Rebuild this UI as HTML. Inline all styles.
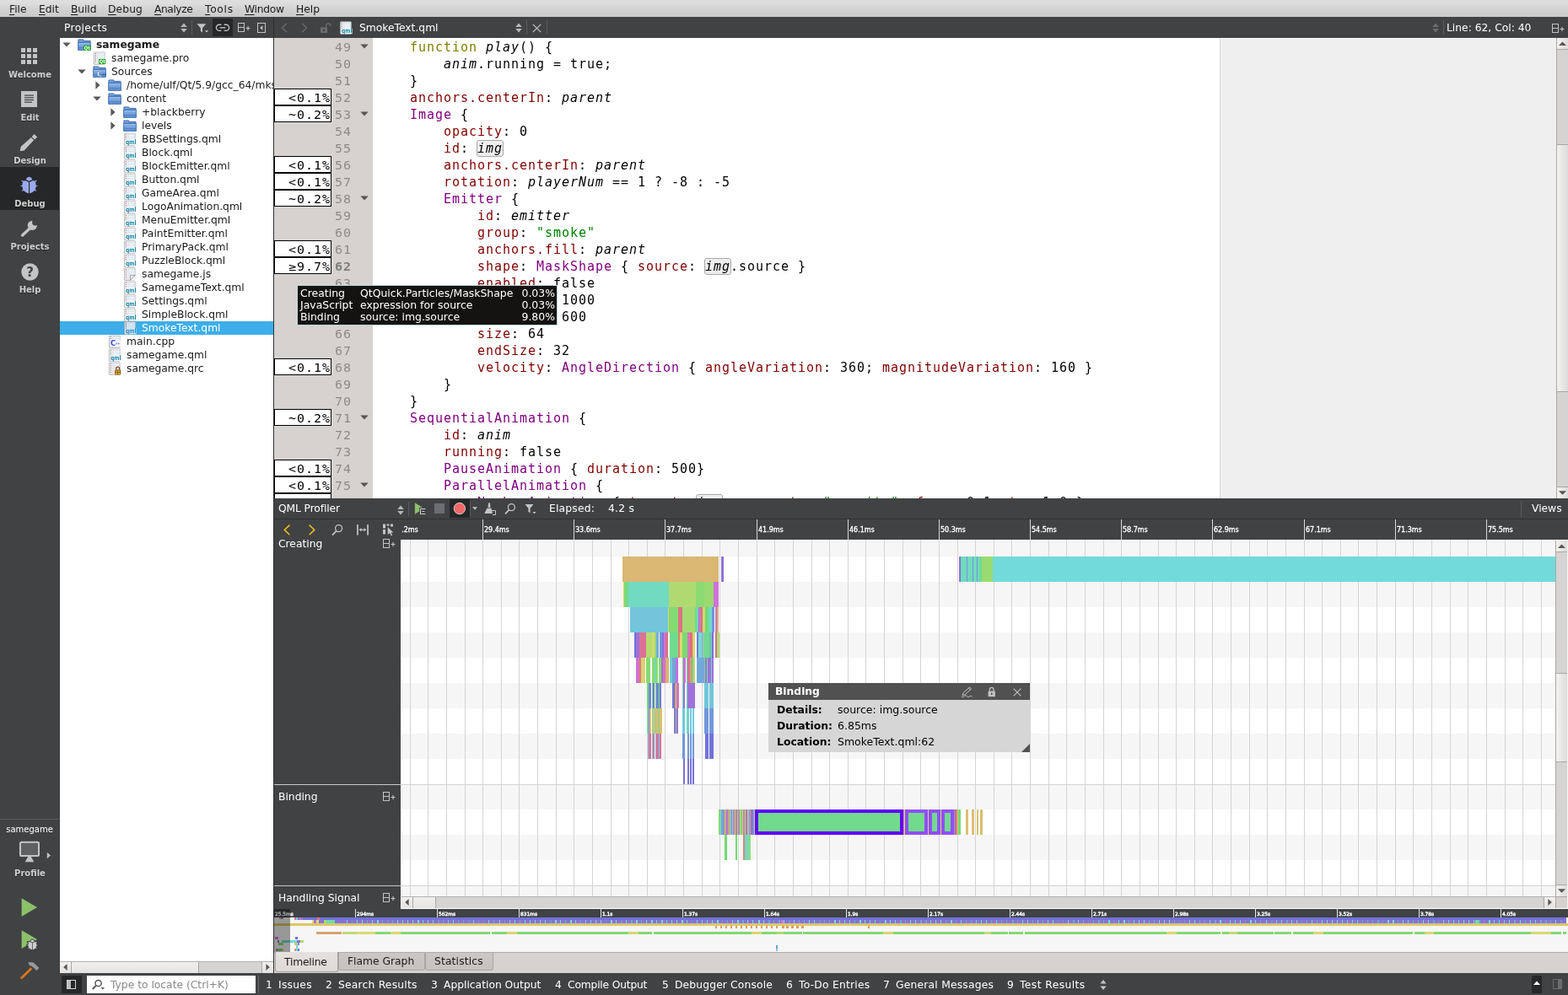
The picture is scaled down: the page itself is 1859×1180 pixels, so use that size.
<!DOCTYPE html>
<html lang="en"><head><meta charset="utf-8"><title>Qt Creator - QML Profiler</title>
<style>
html,body{margin:0;padding:0;background:#404244;}
#r{position:absolute;left:0;top:0;width:1859px;height:1180px;overflow:hidden;will-change:transform;font-family:"DejaVu Sans","Liberation Sans",sans-serif;}
#r div,#r svg{position:absolute;}
#r svg{overflow:visible;}
.t{white-space:pre;line-height:0;}
.m{font-family:"DejaVu Sans Mono","Liberation Mono",monospace;}
.bl{display:inline-block;width:0;height:20px;vertical-align:baseline;}
u{text-decoration:underline;text-underline-offset:2px;text-decoration-thickness:1px;}
.k{color:#808000}.p{color:#800000}.y{color:#800080}.s{color:#008000}.i{font-style:italic}
.code{letter-spacing:0.96875px;color:#000}
.hl{outline:1px solid #a8a8a8;background:#eee;border-radius:2px;}
.rl{-webkit-text-stroke:0.3px #fff;}
.rl2{-webkit-text-stroke:0.4px #fff;}
.pb{width:68px;height:20px;box-sizing:border-box;border:1px solid #000;background:#fff;}
</style></head>
<body><div id="r">
<div style="left:0px;top:0px;width:1859px;height:20px;background:linear-gradient(#dfdfdf,#dcdcdc 20%,#d3d3d3 50%,#cccccc 85%,#cacaca 95%,#d0d0d0);"></div>
<div class="t" style="left:11px;top:-5px;font-size:12.3px;color:#1a1a1a;letter-spacing:0px;"><span class="bl"></span><u>F</u>ile</div>
<div class="t" style="left:46px;top:-5px;font-size:12.3px;color:#1a1a1a;letter-spacing:0px;"><span class="bl"></span><u>E</u>dit</div>
<div class="t" style="left:84px;top:-5px;font-size:12.3px;color:#1a1a1a;letter-spacing:-0.1px;"><span class="bl"></span><u>B</u>uild</div>
<div class="t" style="left:128px;top:-5px;font-size:12.3px;color:#1a1a1a;letter-spacing:0.1px;"><span class="bl"></span><u>D</u>ebug</div>
<div class="t" style="left:183px;top:-5px;font-size:12.3px;color:#1a1a1a;letter-spacing:-0.45px;"><span class="bl"></span><u>A</u>nalyze</div>
<div class="t" style="left:243px;top:-5px;font-size:12.3px;color:#1a1a1a;letter-spacing:0.7px;"><span class="bl"></span><u>T</u>ools</div>
<div class="t" style="left:290px;top:-5px;font-size:12.3px;color:#1a1a1a;letter-spacing:-0.28px;"><span class="bl"></span><u>W</u>indow</div>
<div class="t" style="left:351px;top:-5px;font-size:12.3px;color:#1a1a1a;letter-spacing:0px;"><span class="bl"></span><u>H</u>elp</div>
<div style="left:0px;top:20px;width:71px;height:1160px;background:#404244;"></div>
<div style="left:0px;top:198px;width:70px;height:51px;background:#262728;"></div>
<div class="t" style="left:0px;top:72px;font-size:10px;color:#cecece;font-weight:bold;width:71px;text-align:center;text-shadow:0 1px 0 rgba(0,0,0,.45);"><span class="bl"></span>Welcome</div>
<div class="t" style="left:0px;top:123px;font-size:10px;color:#cecece;font-weight:bold;width:71px;text-align:center;text-shadow:0 1px 0 rgba(0,0,0,.45);"><span class="bl"></span>Edit</div>
<div class="t" style="left:0px;top:174px;font-size:10px;color:#cecece;font-weight:bold;width:71px;text-align:center;text-shadow:0 1px 0 rgba(0,0,0,.45);"><span class="bl"></span>Design</div>
<div class="t" style="left:0px;top:225px;font-size:10px;color:#cecece;font-weight:bold;width:71px;text-align:center;text-shadow:0 1px 0 rgba(0,0,0,.45);"><span class="bl"></span>Debug</div>
<div class="t" style="left:0px;top:276px;font-size:10px;color:#cecece;font-weight:bold;width:71px;text-align:center;text-shadow:0 1px 0 rgba(0,0,0,.45);"><span class="bl"></span>Projects</div>
<div class="t" style="left:0px;top:327px;font-size:10px;color:#cecece;font-weight:bold;width:71px;text-align:center;text-shadow:0 1px 0 rgba(0,0,0,.45);"><span class="bl"></span>Help</div>
<svg style="left:25px;top:57px;" width="19" height="19" viewBox="0 0 19 19"><g fill="#c4c4c4"><rect x="0" y="0" width="5" height="5"/><rect x="7" y="0" width="5" height="5"/><rect x="14" y="0" width="5" height="5"/><rect x="0" y="7" width="5" height="5"/><rect x="7" y="7" width="5" height="5"/><rect x="14" y="7" width="5" height="5"/><rect x="0" y="14" width="5" height="5"/><rect x="7" y="14" width="5" height="5"/><rect x="14" y="14" width="5" height="5"/></g></svg>
<svg style="left:25px;top:108px;" width="19" height="19" viewBox="0 0 19 19"><rect width="19" height="19" fill="#c4c4c4"/><g fill="#404244"><rect x="4" y="4.5" width="11" height="1.2"/><rect x="4" y="7.2" width="11" height="1.2"/><rect x="4" y="9.9" width="11" height="1.2"/><rect x="4" y="12.6" width="9" height="1.2"/></g></svg>
<svg style="left:23px;top:158px;" width="24" height="24" viewBox="0 0 24 24"><g fill="#c4c4c4"><path d="M0.7 21.3 L1.8 15.7 L14 5 L17.1 8.3 L5.6 20.5 Z"/><path d="M14.7 4.2 L17.4 1.0 L21.2 4.4 L18.1 7.4 Z"/></g></svg>
<svg style="left:23px;top:208px;" width="24" height="24" viewBox="0 0 24 24"><g fill="#9aa9ef"><path d="M7.9 5.0 C8.6 2.8 10 1.7 11.55 1.7 C13.1 1.7 14.5 2.8 15.2 5.0 L11.55 6.8 Z"/><path d="M6.7 5.9 L11.0 7.9 L11.0 21.2 C8 20.4 4.6 18.4 3.9 15.4 C3.3 13 3.3 10.5 3.9 8.6 C4.5 7.2 5.6 6.3 6.7 5.9 Z"/><path d="M16.4 5.9 L12.1 7.9 L12.1 21.2 C15.1 20.4 18.5 18.4 19.2 15.4 C19.8 13 19.8 10.5 19.2 8.6 C18.6 7.2 17.5 6.3 16.4 5.9 Z"/><path d="M2.0 5.8 L5.6 6.6 L4.2 8.2 Z M0.8 12.5 L4 11.6 L4 13.4 Z M2.6 19.0 L4.2 16.2 L5.6 17.8 Z M21.1 5.8 L17.5 6.6 L18.9 8.2 Z M22.3 12.5 L19.1 11.6 L19.1 13.4 Z M20.5 19.0 L18.9 16.2 L17.5 17.8 Z"/></g></svg>
<svg style="left:23px;top:260px;" width="24" height="24" viewBox="0 0 24 24"><path d="M3.6 19.0 L13 10.3" stroke="#c4c4c4" stroke-width="3.4" stroke-linecap="round" fill="none"/><circle cx="15.4" cy="7.3" r="5.6" fill="#c4c4c4"/><circle cx="18.9" cy="3.8" r="3.75" fill="#404244"/></svg>
<svg style="left:25px;top:312px;" width="21" height="21" viewBox="0 0 21 21"><circle cx="10.5" cy="10.5" r="10.2" fill="#c4c4c4"/></svg>
<div class="t" style="left:25px;top:308px;font-size:15px;color:#404244;font-weight:bold;width:21px;text-align:center;"><span class="bl"></span>?</div>
<div style="left:0px;top:971px;width:70px;height:1px;background:#5a5c5e;"></div>
<div class="t" style="left:0px;top:967px;font-size:10px;color:#fff;width:70px;text-align:center;"><span class="bl"></span>samegame</div>
<svg style="left:22px;top:997px;" width="26" height="27" viewBox="0 0 26 27"><rect x="2" y="1.8" width="22" height="16.2" rx="1.6" fill="#5f6062" stroke="#c4c4c4" stroke-width="2"/><path d="M11.2 19 L14.8 19 L18.3 25.2 L7.7 25.2 Z" fill="#c4c4c4"/></svg>
<svg style="left:55px;top:1010px;" width="6" height="9" viewBox="0 0 6 9"><path d="M0.8 0.8 L5 4.5 L0.8 8.2 Z" fill="#c4c4c4"/></svg>
<div class="t" style="left:0px;top:1019px;font-size:10px;color:#cecece;font-weight:bold;width:71px;text-align:center;text-shadow:0 1px 0 rgba(0,0,0,.45);"><span class="bl"></span>Profile</div>
<svg style="left:24px;top:1064px;" width="22" height="25" viewBox="0 0 22 25"><path d="M1.6 1.2 L20 12 L1.6 23 Z" fill="#8cc06a"/></svg>
<svg style="left:24px;top:1102px;" width="24" height="26" viewBox="0 0 24 26"><path d="M1.6 1.2 L20 12 L1.6 23 Z" fill="#8cc06a"/><g transform="translate(7.5,11.5) scale(0.6)"><g fill="#404244" stroke="#404244" stroke-width="3.4" stroke-linejoin="round"><path d="M7.9 5.0 C8.6 2.8 10 1.7 11.55 1.7 C13.1 1.7 14.5 2.8 15.2 5.0 L11.55 6.8 Z"/><path d="M6.7 5.9 L11.0 7.9 L11.0 21.2 C8 20.4 4.6 18.4 3.9 15.4 C3.3 13 3.3 10.5 3.9 8.6 C4.5 7.2 5.6 6.3 6.7 5.9 Z"/><path d="M16.4 5.9 L12.1 7.9 L12.1 21.2 C15.1 20.4 18.5 18.4 19.2 15.4 C19.8 13 19.8 10.5 19.2 8.6 C18.6 7.2 17.5 6.3 16.4 5.9 Z"/><path d="M2.0 5.8 L5.6 6.6 L4.2 8.2 Z M0.8 12.5 L4 11.6 L4 13.4 Z M2.6 19.0 L4.2 16.2 L5.6 17.8 Z M21.1 5.8 L17.5 6.6 L18.9 8.2 Z M22.3 12.5 L19.1 11.6 L19.1 13.4 Z M20.5 19.0 L18.9 16.2 L17.5 17.8 Z"/></g><g fill="#cdcdcd"><path d="M7.9 5.0 C8.6 2.8 10 1.7 11.55 1.7 C13.1 1.7 14.5 2.8 15.2 5.0 L11.55 6.8 Z"/><path d="M6.7 5.9 L11.0 7.9 L11.0 21.2 C8 20.4 4.6 18.4 3.9 15.4 C3.3 13 3.3 10.5 3.9 8.6 C4.5 7.2 5.6 6.3 6.7 5.9 Z"/><path d="M16.4 5.9 L12.1 7.9 L12.1 21.2 C15.1 20.4 18.5 18.4 19.2 15.4 C19.8 13 19.8 10.5 19.2 8.6 C18.6 7.2 17.5 6.3 16.4 5.9 Z"/><path d="M2.0 5.8 L5.6 6.6 L4.2 8.2 Z M0.8 12.5 L4 11.6 L4 13.4 Z M2.6 19.0 L4.2 16.2 L5.6 17.8 Z M21.1 5.8 L17.5 6.6 L18.9 8.2 Z M22.3 12.5 L19.1 11.6 L19.1 13.4 Z M20.5 19.0 L18.9 16.2 L17.5 17.8 Z"/></g></g></svg>
<svg style="left:22px;top:1140px;" width="26" height="24" viewBox="0 0 26 24"><path d="M2.8 20.4 L15.4 8.2" stroke="#d9761e" stroke-width="2.8" fill="none"/><path d="M11.1 1.3 L17.2 1.3 L24.3 7.8 L21.5 11.1 L15.4 5.6 L13.6 5.6 Z" fill="#9a9a9a"/></svg>
<div style="left:71px;top:20px;width:253px;height:25px;background:#404244;"></div>
<div class="t" style="left:76px;top:17px;font-size:12.3px;color:#fff;letter-spacing:0.36px;"><span class="bl"></span>Projects</div>
<svg style="left:214px;top:27px;" width="8" height="12" viewBox="0 0 8 12"><path d="M0.2 5 L4 0.6 L7.8 5 Z M0.2 7 L4 11.4 L7.8 7 Z" fill="#b8b8b8"/></svg>
<div style="left:227px;top:24px;width:1px;height:17px;background:#5a5c5e;"></div>
<svg style="left:233px;top:27px;" width="15" height="14" viewBox="0 0 15 14"><path d="M0.4 1.2 L11.4 1.2 L7 6.2 L7 11.4 L4.8 9.8 L4.8 6.2 Z" fill="#c4c4c4"/><path d="M9.8 9.2 L14.2 9.2 L12 11.6 Z" fill="#c4c4c4"/></svg>
<div style="left:252px;top:22px;width:24px;height:21px;background:#262728;"></div>
<svg style="left:256px;top:28px;" width="16" height="10" viewBox="0 0 16 10"><g fill="none" stroke="#c4c4c4" stroke-width="1.4"><path d="M6.4 1.2 L4 1.2 A3.3 3.3 0 0 0 4 8.4 L6.4 8.4"/><path d="M9.6 1.2 L12 1.2 A3.3 3.3 0 0 1 12 8.4 L9.6 8.4"/><path d="M4.6 4.8 L11.4 4.8"/></g></svg>
<svg style="left:282px;top:26px;" width="15" height="14" viewBox="0 0 15 14"><g fill="none" stroke="#c4c4c4" stroke-width="1"><rect x="0.5" y="1.5" width="7" height="10"/><path d="M0.5 6.5 L7.5 6.5"/><path d="M9.5 7.5 L14.5 7.5 M12 5 L12 10" stroke-width="1.2"/></g></svg>
<svg style="left:305px;top:26px;" width="11" height="14" viewBox="0 0 11 14"><rect x="0.5" y="1.5" width="9" height="11" fill="none" stroke="#c4c4c4" stroke-width="1"/><path d="M6.4 4.2 L3.2 7 L6.4 9.8 Z" fill="#c4c4c4"/></svg>
<div style="left:71px;top:45px;width:253px;height:1095px;background:#fff;"></div>
<div style="left:324px;top:20px;width:1px;height:1134px;background:#2d2e2f;"></div>
<div style="left:71px;top:45px;width:253px;height:1093px;overflow:hidden">
<svg style="left:3px;top:5px" width="10" height="6" viewBox="0 0 10 6"><path d="M0.3 0.4 L9.7 0.4 L5 5.6 Z" fill="#5a5a5a"/></svg>
<svg style="left:21px;top:0px" width="17" height="16" viewBox="0 0 17 16"><defs><linearGradient id="fg1" x1="0" y1="0" x2="0" y2="1"><stop offset="0" stop-color="#8db4e6"/><stop offset="0.62" stop-color="#6f9cd8"/><stop offset="0.66" stop-color="#4f7fc2"/><stop offset="0.74" stop-color="#6a97d3"/><stop offset="1" stop-color="#5f8ccb"/></linearGradient></defs><path d="M0.9 1.9 L6.6 1.9 L7.6 3.4 L15.1 3.4 L15.1 6 L0.9 6 Z" fill="#5a8bcd" stroke="#3b6bb0" stroke-width="0.9"/><path d="M1.6 3.3 L6.4 3.3" stroke="#9cc0ec" stroke-width="0.8"/><path d="M0.6 5.6 L15.4 5.6 L15.4 14.4 L0.6 14.4 Z" fill="url(#fg1)" stroke="#3b6bb0" stroke-width="0.9"/><path d="M1.2 6.4 L14.8 6.4" stroke="#a9c8ee" stroke-width="0.7"/><rect x="7.1" y="8.8" width="8.2" height="6.2" rx="0.6" fill="#17a81a"/><text x="11.2" y="14.1" font-family="'DejaVu Sans',sans-serif" font-size="6" font-weight="bold" fill="#fff" text-anchor="middle" textLength="6.799999999999999" lengthAdjust="spacingAndGlyphs">Qt</text></svg>
<div class="t" style="left:43px;top:-8px;font-size:12.3px;color:#1a1a1a;font-weight:bold;"><span class="bl"></span>samegame</div>
<svg style="left:38px;top:16px" width="17" height="16" viewBox="0 0 17 16"><path d="M2.8 0.9 L15.2 0.9 L15.2 15 L2.8 15 Z" fill="#fdfdfd" stroke="#bdbdbd" stroke-width="0.9"/><path d="M2.4 1.2 L2.4 15.4 L14.8 15.4" fill="none" stroke="#9c9c9c" stroke-width="0.7" opacity=".6"/><g shape-rendering="crispEdges"><g fill="#cfe0ee"><rect x="6" y="2" width="9" height="1"/><rect x="6" y="4" width="9" height="1"/><rect x="6" y="6" width="9" height="1"/><rect x="6" y="8" width="9" height="1"/><rect x="6" y="10" width="9" height="1"/><rect x="6" y="12" width="9" height="1"/></g><rect x="6" y="1" width="1" height="14" fill="#f3d3e4"/><g fill="#6a747e"><rect x="4" y="2" width="1" height="1"/><rect x="4" y="4" width="1" height="1"/><rect x="4" y="6" width="1" height="1"/><rect x="4" y="8" width="1" height="1"/><rect x="4" y="10" width="1" height="1"/><rect x="4" y="12" width="1" height="1"/></g></g><rect x="8.1" y="9.1" width="8.2" height="6" rx="0.6" fill="#17a81a"/><text x="12.2" y="14.2" font-family="'DejaVu Sans',sans-serif" font-size="6" font-weight="bold" fill="#fff" text-anchor="middle" textLength="6.799999999999999" lengthAdjust="spacingAndGlyphs">Qt</text></svg>
<div class="t" style="left:61px;top:8px;font-size:12.3px;color:#1a1a1a;"><span class="bl"></span>samegame.pro</div>
<svg style="left:21px;top:37px" width="10" height="6" viewBox="0 0 10 6"><path d="M0.3 0.4 L9.7 0.4 L5 5.6 Z" fill="#5a5a5a"/></svg>
<svg style="left:39px;top:32px" width="17" height="16" viewBox="0 0 17 16"><defs><linearGradient id="fg2" x1="0" y1="0" x2="0" y2="1"><stop offset="0" stop-color="#8db4e6"/><stop offset="0.62" stop-color="#6f9cd8"/><stop offset="0.66" stop-color="#4f7fc2"/><stop offset="0.74" stop-color="#6a97d3"/><stop offset="1" stop-color="#5f8ccb"/></linearGradient></defs><path d="M0.9 1.9 L6.6 1.9 L7.6 3.4 L15.1 3.4 L15.1 6 L0.9 6 Z" fill="#5a8bcd" stroke="#3b6bb0" stroke-width="0.9"/><path d="M1.6 3.3 L6.4 3.3" stroke="#9cc0ec" stroke-width="0.8"/><path d="M0.6 5.6 L15.4 5.6 L15.4 14.4 L0.6 14.4 Z" fill="url(#fg2)" stroke="#3b6bb0" stroke-width="0.9"/><path d="M1.2 6.4 L14.8 6.4" stroke="#a9c8ee" stroke-width="0.7"/><text x="8.4" y="14.2" font-family="'DejaVu Sans',sans-serif" font-size="9" font-weight="bold" fill="#f4f8ff" stroke="#2c5a9c" stroke-width="0.35" text-anchor="middle">C</text><text x="13.4" y="13.4" font-family="'DejaVu Sans',sans-serif" font-size="5.5" font-weight="bold" fill="#1f3f80" text-anchor="middle" textLength="5.4" lengthAdjust="spacingAndGlyphs">++</text></svg>
<div class="t" style="left:61px;top:24px;font-size:12.3px;color:#1a1a1a;"><span class="bl"></span>Sources</div>
<svg style="left:42px;top:51px" width="6" height="10" viewBox="0 0 6 10"><path d="M0.4 0.3 L5.6 5 L0.4 9.7 Z" fill="#5a5a5a"/></svg>
<svg style="left:57px;top:48px" width="17" height="16" viewBox="0 0 17 16"><defs><linearGradient id="fg3" x1="0" y1="0" x2="0" y2="1"><stop offset="0" stop-color="#8db4e6"/><stop offset="0.62" stop-color="#6f9cd8"/><stop offset="0.66" stop-color="#4f7fc2"/><stop offset="0.74" stop-color="#6a97d3"/><stop offset="1" stop-color="#5f8ccb"/></linearGradient></defs><path d="M0.9 1.9 L6.6 1.9 L7.6 3.4 L15.1 3.4 L15.1 6 L0.9 6 Z" fill="#5a8bcd" stroke="#3b6bb0" stroke-width="0.9"/><path d="M1.6 3.3 L6.4 3.3" stroke="#9cc0ec" stroke-width="0.8"/><path d="M0.6 5.6 L15.4 5.6 L15.4 14.4 L0.6 14.4 Z" fill="url(#fg3)" stroke="#3b6bb0" stroke-width="0.9"/><path d="M1.2 6.4 L14.8 6.4" stroke="#a9c8ee" stroke-width="0.7"/></svg>
<div class="t" style="left:79px;top:40px;font-size:12.3px;color:#1a1a1a;"><span class="bl"></span>/home/ulf/Qt/5.9/gcc_64/mkspecs</div>
<svg style="left:39px;top:69px" width="10" height="6" viewBox="0 0 10 6"><path d="M0.3 0.4 L9.7 0.4 L5 5.6 Z" fill="#5a5a5a"/></svg>
<svg style="left:57px;top:64px" width="17" height="16" viewBox="0 0 17 16"><defs><linearGradient id="fg4" x1="0" y1="0" x2="0" y2="1"><stop offset="0" stop-color="#8db4e6"/><stop offset="0.62" stop-color="#6f9cd8"/><stop offset="0.66" stop-color="#4f7fc2"/><stop offset="0.74" stop-color="#6a97d3"/><stop offset="1" stop-color="#5f8ccb"/></linearGradient></defs><path d="M0.9 1.9 L6.6 1.9 L7.6 3.4 L15.1 3.4 L15.1 6 L0.9 6 Z" fill="#5a8bcd" stroke="#3b6bb0" stroke-width="0.9"/><path d="M1.6 3.3 L6.4 3.3" stroke="#9cc0ec" stroke-width="0.8"/><path d="M0.6 5.6 L15.4 5.6 L15.4 14.4 L0.6 14.4 Z" fill="url(#fg4)" stroke="#3b6bb0" stroke-width="0.9"/><path d="M1.2 6.4 L14.8 6.4" stroke="#a9c8ee" stroke-width="0.7"/></svg>
<div class="t" style="left:79px;top:56px;font-size:12.3px;color:#1a1a1a;"><span class="bl"></span>content</div>
<svg style="left:60px;top:83px" width="6" height="10" viewBox="0 0 6 10"><path d="M0.4 0.3 L5.6 5 L0.4 9.7 Z" fill="#5a5a5a"/></svg>
<svg style="left:75px;top:80px" width="17" height="16" viewBox="0 0 17 16"><defs><linearGradient id="fg5" x1="0" y1="0" x2="0" y2="1"><stop offset="0" stop-color="#8db4e6"/><stop offset="0.62" stop-color="#6f9cd8"/><stop offset="0.66" stop-color="#4f7fc2"/><stop offset="0.74" stop-color="#6a97d3"/><stop offset="1" stop-color="#5f8ccb"/></linearGradient></defs><path d="M0.9 1.9 L6.6 1.9 L7.6 3.4 L15.1 3.4 L15.1 6 L0.9 6 Z" fill="#5a8bcd" stroke="#3b6bb0" stroke-width="0.9"/><path d="M1.6 3.3 L6.4 3.3" stroke="#9cc0ec" stroke-width="0.8"/><path d="M0.6 5.6 L15.4 5.6 L15.4 14.4 L0.6 14.4 Z" fill="url(#fg5)" stroke="#3b6bb0" stroke-width="0.9"/><path d="M1.2 6.4 L14.8 6.4" stroke="#a9c8ee" stroke-width="0.7"/></svg>
<div class="t" style="left:97px;top:72px;font-size:12.3px;color:#1a1a1a;"><span class="bl"></span>+blackberry</div>
<svg style="left:60px;top:99px" width="6" height="10" viewBox="0 0 6 10"><path d="M0.4 0.3 L5.6 5 L0.4 9.7 Z" fill="#5a5a5a"/></svg>
<svg style="left:75px;top:96px" width="17" height="16" viewBox="0 0 17 16"><defs><linearGradient id="fg6" x1="0" y1="0" x2="0" y2="1"><stop offset="0" stop-color="#8db4e6"/><stop offset="0.62" stop-color="#6f9cd8"/><stop offset="0.66" stop-color="#4f7fc2"/><stop offset="0.74" stop-color="#6a97d3"/><stop offset="1" stop-color="#5f8ccb"/></linearGradient></defs><path d="M0.9 1.9 L6.6 1.9 L7.6 3.4 L15.1 3.4 L15.1 6 L0.9 6 Z" fill="#5a8bcd" stroke="#3b6bb0" stroke-width="0.9"/><path d="M1.6 3.3 L6.4 3.3" stroke="#9cc0ec" stroke-width="0.8"/><path d="M0.6 5.6 L15.4 5.6 L15.4 14.4 L0.6 14.4 Z" fill="url(#fg6)" stroke="#3b6bb0" stroke-width="0.9"/><path d="M1.2 6.4 L14.8 6.4" stroke="#a9c8ee" stroke-width="0.7"/></svg>
<div class="t" style="left:97px;top:88px;font-size:12.3px;color:#1a1a1a;"><span class="bl"></span>levels</div>
<svg style="left:74px;top:112px" width="17" height="16" viewBox="0 0 17 16"><path d="M2.8 0.9 L15.2 0.9 L15.2 15 L2.8 15 Z" fill="#fdfdfd" stroke="#bdbdbd" stroke-width="0.9"/><path d="M2.4 1.2 L2.4 15.4 L14.8 15.4" fill="none" stroke="#9c9c9c" stroke-width="0.7" opacity=".6"/><g shape-rendering="crispEdges"><g fill="#cfe0ee"><rect x="6" y="2" width="9" height="1"/><rect x="6" y="4" width="9" height="1"/><rect x="6" y="6" width="9" height="1"/><rect x="6" y="8" width="9" height="1"/><rect x="6" y="10" width="9" height="1"/><rect x="6" y="12" width="9" height="1"/></g><rect x="6" y="1" width="1" height="14" fill="#f3d3e4"/><g fill="#6a747e"><rect x="4" y="2" width="1" height="1"/><rect x="4" y="4" width="1" height="1"/><rect x="4" y="6" width="1" height="1"/><rect x="4" y="8" width="1" height="1"/><rect x="4" y="10" width="1" height="1"/><rect x="4" y="12" width="1" height="1"/></g></g><rect x="3.6" y="8.6" width="13" height="6.6" fill="#fdfdfd" opacity=".9"/><text x="10.2" y="14" font-family="'DejaVu Sans',sans-serif" font-size="7.6" font-weight="bold" fill="#1a86a6" text-anchor="middle" textLength="12.6" lengthAdjust="spacingAndGlyphs">qml</text></svg>
<div class="t" style="left:97px;top:104px;font-size:12.3px;color:#1a1a1a;"><span class="bl"></span>BBSettings.qml</div>
<svg style="left:74px;top:128px" width="17" height="16" viewBox="0 0 17 16"><path d="M2.8 0.9 L15.2 0.9 L15.2 15 L2.8 15 Z" fill="#fdfdfd" stroke="#bdbdbd" stroke-width="0.9"/><path d="M2.4 1.2 L2.4 15.4 L14.8 15.4" fill="none" stroke="#9c9c9c" stroke-width="0.7" opacity=".6"/><g shape-rendering="crispEdges"><g fill="#cfe0ee"><rect x="6" y="2" width="9" height="1"/><rect x="6" y="4" width="9" height="1"/><rect x="6" y="6" width="9" height="1"/><rect x="6" y="8" width="9" height="1"/><rect x="6" y="10" width="9" height="1"/><rect x="6" y="12" width="9" height="1"/></g><rect x="6" y="1" width="1" height="14" fill="#f3d3e4"/><g fill="#6a747e"><rect x="4" y="2" width="1" height="1"/><rect x="4" y="4" width="1" height="1"/><rect x="4" y="6" width="1" height="1"/><rect x="4" y="8" width="1" height="1"/><rect x="4" y="10" width="1" height="1"/><rect x="4" y="12" width="1" height="1"/></g></g><rect x="3.6" y="8.6" width="13" height="6.6" fill="#fdfdfd" opacity=".9"/><text x="10.2" y="14" font-family="'DejaVu Sans',sans-serif" font-size="7.6" font-weight="bold" fill="#1a86a6" text-anchor="middle" textLength="12.6" lengthAdjust="spacingAndGlyphs">qml</text></svg>
<div class="t" style="left:97px;top:120px;font-size:12.3px;color:#1a1a1a;"><span class="bl"></span>Block.qml</div>
<svg style="left:74px;top:144px" width="17" height="16" viewBox="0 0 17 16"><path d="M2.8 0.9 L15.2 0.9 L15.2 15 L2.8 15 Z" fill="#fdfdfd" stroke="#bdbdbd" stroke-width="0.9"/><path d="M2.4 1.2 L2.4 15.4 L14.8 15.4" fill="none" stroke="#9c9c9c" stroke-width="0.7" opacity=".6"/><g shape-rendering="crispEdges"><g fill="#cfe0ee"><rect x="6" y="2" width="9" height="1"/><rect x="6" y="4" width="9" height="1"/><rect x="6" y="6" width="9" height="1"/><rect x="6" y="8" width="9" height="1"/><rect x="6" y="10" width="9" height="1"/><rect x="6" y="12" width="9" height="1"/></g><rect x="6" y="1" width="1" height="14" fill="#f3d3e4"/><g fill="#6a747e"><rect x="4" y="2" width="1" height="1"/><rect x="4" y="4" width="1" height="1"/><rect x="4" y="6" width="1" height="1"/><rect x="4" y="8" width="1" height="1"/><rect x="4" y="10" width="1" height="1"/><rect x="4" y="12" width="1" height="1"/></g></g><rect x="3.6" y="8.6" width="13" height="6.6" fill="#fdfdfd" opacity=".9"/><text x="10.2" y="14" font-family="'DejaVu Sans',sans-serif" font-size="7.6" font-weight="bold" fill="#1a86a6" text-anchor="middle" textLength="12.6" lengthAdjust="spacingAndGlyphs">qml</text></svg>
<div class="t" style="left:97px;top:136px;font-size:12.3px;color:#1a1a1a;"><span class="bl"></span>BlockEmitter.qml</div>
<svg style="left:74px;top:160px" width="17" height="16" viewBox="0 0 17 16"><path d="M2.8 0.9 L15.2 0.9 L15.2 15 L2.8 15 Z" fill="#fdfdfd" stroke="#bdbdbd" stroke-width="0.9"/><path d="M2.4 1.2 L2.4 15.4 L14.8 15.4" fill="none" stroke="#9c9c9c" stroke-width="0.7" opacity=".6"/><g shape-rendering="crispEdges"><g fill="#cfe0ee"><rect x="6" y="2" width="9" height="1"/><rect x="6" y="4" width="9" height="1"/><rect x="6" y="6" width="9" height="1"/><rect x="6" y="8" width="9" height="1"/><rect x="6" y="10" width="9" height="1"/><rect x="6" y="12" width="9" height="1"/></g><rect x="6" y="1" width="1" height="14" fill="#f3d3e4"/><g fill="#6a747e"><rect x="4" y="2" width="1" height="1"/><rect x="4" y="4" width="1" height="1"/><rect x="4" y="6" width="1" height="1"/><rect x="4" y="8" width="1" height="1"/><rect x="4" y="10" width="1" height="1"/><rect x="4" y="12" width="1" height="1"/></g></g><rect x="3.6" y="8.6" width="13" height="6.6" fill="#fdfdfd" opacity=".9"/><text x="10.2" y="14" font-family="'DejaVu Sans',sans-serif" font-size="7.6" font-weight="bold" fill="#1a86a6" text-anchor="middle" textLength="12.6" lengthAdjust="spacingAndGlyphs">qml</text></svg>
<div class="t" style="left:97px;top:152px;font-size:12.3px;color:#1a1a1a;"><span class="bl"></span>Button.qml</div>
<svg style="left:74px;top:176px" width="17" height="16" viewBox="0 0 17 16"><path d="M2.8 0.9 L15.2 0.9 L15.2 15 L2.8 15 Z" fill="#fdfdfd" stroke="#bdbdbd" stroke-width="0.9"/><path d="M2.4 1.2 L2.4 15.4 L14.8 15.4" fill="none" stroke="#9c9c9c" stroke-width="0.7" opacity=".6"/><g shape-rendering="crispEdges"><g fill="#cfe0ee"><rect x="6" y="2" width="9" height="1"/><rect x="6" y="4" width="9" height="1"/><rect x="6" y="6" width="9" height="1"/><rect x="6" y="8" width="9" height="1"/><rect x="6" y="10" width="9" height="1"/><rect x="6" y="12" width="9" height="1"/></g><rect x="6" y="1" width="1" height="14" fill="#f3d3e4"/><g fill="#6a747e"><rect x="4" y="2" width="1" height="1"/><rect x="4" y="4" width="1" height="1"/><rect x="4" y="6" width="1" height="1"/><rect x="4" y="8" width="1" height="1"/><rect x="4" y="10" width="1" height="1"/><rect x="4" y="12" width="1" height="1"/></g></g><rect x="3.6" y="8.6" width="13" height="6.6" fill="#fdfdfd" opacity=".9"/><text x="10.2" y="14" font-family="'DejaVu Sans',sans-serif" font-size="7.6" font-weight="bold" fill="#1a86a6" text-anchor="middle" textLength="12.6" lengthAdjust="spacingAndGlyphs">qml</text></svg>
<div class="t" style="left:97px;top:168px;font-size:12.3px;color:#1a1a1a;"><span class="bl"></span>GameArea.qml</div>
<svg style="left:74px;top:192px" width="17" height="16" viewBox="0 0 17 16"><path d="M2.8 0.9 L15.2 0.9 L15.2 15 L2.8 15 Z" fill="#fdfdfd" stroke="#bdbdbd" stroke-width="0.9"/><path d="M2.4 1.2 L2.4 15.4 L14.8 15.4" fill="none" stroke="#9c9c9c" stroke-width="0.7" opacity=".6"/><g shape-rendering="crispEdges"><g fill="#cfe0ee"><rect x="6" y="2" width="9" height="1"/><rect x="6" y="4" width="9" height="1"/><rect x="6" y="6" width="9" height="1"/><rect x="6" y="8" width="9" height="1"/><rect x="6" y="10" width="9" height="1"/><rect x="6" y="12" width="9" height="1"/></g><rect x="6" y="1" width="1" height="14" fill="#f3d3e4"/><g fill="#6a747e"><rect x="4" y="2" width="1" height="1"/><rect x="4" y="4" width="1" height="1"/><rect x="4" y="6" width="1" height="1"/><rect x="4" y="8" width="1" height="1"/><rect x="4" y="10" width="1" height="1"/><rect x="4" y="12" width="1" height="1"/></g></g><rect x="3.6" y="8.6" width="13" height="6.6" fill="#fdfdfd" opacity=".9"/><text x="10.2" y="14" font-family="'DejaVu Sans',sans-serif" font-size="7.6" font-weight="bold" fill="#1a86a6" text-anchor="middle" textLength="12.6" lengthAdjust="spacingAndGlyphs">qml</text></svg>
<div class="t" style="left:97px;top:184px;font-size:12.3px;color:#1a1a1a;"><span class="bl"></span>LogoAnimation.qml</div>
<svg style="left:74px;top:208px" width="17" height="16" viewBox="0 0 17 16"><path d="M2.8 0.9 L15.2 0.9 L15.2 15 L2.8 15 Z" fill="#fdfdfd" stroke="#bdbdbd" stroke-width="0.9"/><path d="M2.4 1.2 L2.4 15.4 L14.8 15.4" fill="none" stroke="#9c9c9c" stroke-width="0.7" opacity=".6"/><g shape-rendering="crispEdges"><g fill="#cfe0ee"><rect x="6" y="2" width="9" height="1"/><rect x="6" y="4" width="9" height="1"/><rect x="6" y="6" width="9" height="1"/><rect x="6" y="8" width="9" height="1"/><rect x="6" y="10" width="9" height="1"/><rect x="6" y="12" width="9" height="1"/></g><rect x="6" y="1" width="1" height="14" fill="#f3d3e4"/><g fill="#6a747e"><rect x="4" y="2" width="1" height="1"/><rect x="4" y="4" width="1" height="1"/><rect x="4" y="6" width="1" height="1"/><rect x="4" y="8" width="1" height="1"/><rect x="4" y="10" width="1" height="1"/><rect x="4" y="12" width="1" height="1"/></g></g><rect x="3.6" y="8.6" width="13" height="6.6" fill="#fdfdfd" opacity=".9"/><text x="10.2" y="14" font-family="'DejaVu Sans',sans-serif" font-size="7.6" font-weight="bold" fill="#1a86a6" text-anchor="middle" textLength="12.6" lengthAdjust="spacingAndGlyphs">qml</text></svg>
<div class="t" style="left:97px;top:200px;font-size:12.3px;color:#1a1a1a;"><span class="bl"></span>MenuEmitter.qml</div>
<svg style="left:74px;top:224px" width="17" height="16" viewBox="0 0 17 16"><path d="M2.8 0.9 L15.2 0.9 L15.2 15 L2.8 15 Z" fill="#fdfdfd" stroke="#bdbdbd" stroke-width="0.9"/><path d="M2.4 1.2 L2.4 15.4 L14.8 15.4" fill="none" stroke="#9c9c9c" stroke-width="0.7" opacity=".6"/><g shape-rendering="crispEdges"><g fill="#cfe0ee"><rect x="6" y="2" width="9" height="1"/><rect x="6" y="4" width="9" height="1"/><rect x="6" y="6" width="9" height="1"/><rect x="6" y="8" width="9" height="1"/><rect x="6" y="10" width="9" height="1"/><rect x="6" y="12" width="9" height="1"/></g><rect x="6" y="1" width="1" height="14" fill="#f3d3e4"/><g fill="#6a747e"><rect x="4" y="2" width="1" height="1"/><rect x="4" y="4" width="1" height="1"/><rect x="4" y="6" width="1" height="1"/><rect x="4" y="8" width="1" height="1"/><rect x="4" y="10" width="1" height="1"/><rect x="4" y="12" width="1" height="1"/></g></g><rect x="3.6" y="8.6" width="13" height="6.6" fill="#fdfdfd" opacity=".9"/><text x="10.2" y="14" font-family="'DejaVu Sans',sans-serif" font-size="7.6" font-weight="bold" fill="#1a86a6" text-anchor="middle" textLength="12.6" lengthAdjust="spacingAndGlyphs">qml</text></svg>
<div class="t" style="left:97px;top:216px;font-size:12.3px;color:#1a1a1a;"><span class="bl"></span>PaintEmitter.qml</div>
<svg style="left:74px;top:240px" width="17" height="16" viewBox="0 0 17 16"><path d="M2.8 0.9 L15.2 0.9 L15.2 15 L2.8 15 Z" fill="#fdfdfd" stroke="#bdbdbd" stroke-width="0.9"/><path d="M2.4 1.2 L2.4 15.4 L14.8 15.4" fill="none" stroke="#9c9c9c" stroke-width="0.7" opacity=".6"/><g shape-rendering="crispEdges"><g fill="#cfe0ee"><rect x="6" y="2" width="9" height="1"/><rect x="6" y="4" width="9" height="1"/><rect x="6" y="6" width="9" height="1"/><rect x="6" y="8" width="9" height="1"/><rect x="6" y="10" width="9" height="1"/><rect x="6" y="12" width="9" height="1"/></g><rect x="6" y="1" width="1" height="14" fill="#f3d3e4"/><g fill="#6a747e"><rect x="4" y="2" width="1" height="1"/><rect x="4" y="4" width="1" height="1"/><rect x="4" y="6" width="1" height="1"/><rect x="4" y="8" width="1" height="1"/><rect x="4" y="10" width="1" height="1"/><rect x="4" y="12" width="1" height="1"/></g></g><rect x="3.6" y="8.6" width="13" height="6.6" fill="#fdfdfd" opacity=".9"/><text x="10.2" y="14" font-family="'DejaVu Sans',sans-serif" font-size="7.6" font-weight="bold" fill="#1a86a6" text-anchor="middle" textLength="12.6" lengthAdjust="spacingAndGlyphs">qml</text></svg>
<div class="t" style="left:97px;top:232px;font-size:12.3px;color:#1a1a1a;"><span class="bl"></span>PrimaryPack.qml</div>
<svg style="left:74px;top:256px" width="17" height="16" viewBox="0 0 17 16"><path d="M2.8 0.9 L15.2 0.9 L15.2 15 L2.8 15 Z" fill="#fdfdfd" stroke="#bdbdbd" stroke-width="0.9"/><path d="M2.4 1.2 L2.4 15.4 L14.8 15.4" fill="none" stroke="#9c9c9c" stroke-width="0.7" opacity=".6"/><g shape-rendering="crispEdges"><g fill="#cfe0ee"><rect x="6" y="2" width="9" height="1"/><rect x="6" y="4" width="9" height="1"/><rect x="6" y="6" width="9" height="1"/><rect x="6" y="8" width="9" height="1"/><rect x="6" y="10" width="9" height="1"/><rect x="6" y="12" width="9" height="1"/></g><rect x="6" y="1" width="1" height="14" fill="#f3d3e4"/><g fill="#6a747e"><rect x="4" y="2" width="1" height="1"/><rect x="4" y="4" width="1" height="1"/><rect x="4" y="6" width="1" height="1"/><rect x="4" y="8" width="1" height="1"/><rect x="4" y="10" width="1" height="1"/><rect x="4" y="12" width="1" height="1"/></g></g><rect x="3.6" y="8.6" width="13" height="6.6" fill="#fdfdfd" opacity=".9"/><text x="10.2" y="14" font-family="'DejaVu Sans',sans-serif" font-size="7.6" font-weight="bold" fill="#1a86a6" text-anchor="middle" textLength="12.6" lengthAdjust="spacingAndGlyphs">qml</text></svg>
<div class="t" style="left:97px;top:248px;font-size:12.3px;color:#1a1a1a;"><span class="bl"></span>PuzzleBlock.qml</div>
<svg style="left:74px;top:272px" width="17" height="16" viewBox="0 0 17 16"><path d="M2.8 0.9 L15.2 0.9 L15.2 15 L2.8 15 Z" fill="#fdfdfd" stroke="#bdbdbd" stroke-width="0.9"/><path d="M2.4 1.2 L2.4 15.4 L14.8 15.4" fill="none" stroke="#9c9c9c" stroke-width="0.7" opacity=".6"/><g shape-rendering="crispEdges"><g fill="#cfe0ee"><rect x="6" y="2" width="9" height="1"/><rect x="6" y="4" width="9" height="1"/><rect x="6" y="6" width="9" height="1"/><rect x="6" y="8" width="9" height="1"/><rect x="6" y="10" width="9" height="1"/><rect x="6" y="12" width="9" height="1"/></g><rect x="6" y="1" width="1" height="14" fill="#f3d3e4"/><g fill="#6a747e"><rect x="4" y="2" width="1" height="1"/><rect x="4" y="4" width="1" height="1"/><rect x="4" y="6" width="1" height="1"/><rect x="4" y="8" width="1" height="1"/><rect x="4" y="10" width="1" height="1"/><rect x="4" y="12" width="1" height="1"/></g></g><path d="M9.6 15 L15.2 9.6 L9.6 9.6 Z" fill="#f4f4f4" stroke="#8c8c8c" stroke-width="0.8"/><path d="M10 15.4 L15.6 15.4 L15.6 10 Z" fill="#fff"/></svg>
<div class="t" style="left:97px;top:264px;font-size:12.3px;color:#1a1a1a;"><span class="bl"></span>samegame.js</div>
<svg style="left:74px;top:288px" width="17" height="16" viewBox="0 0 17 16"><path d="M2.8 0.9 L15.2 0.9 L15.2 15 L2.8 15 Z" fill="#fdfdfd" stroke="#bdbdbd" stroke-width="0.9"/><path d="M2.4 1.2 L2.4 15.4 L14.8 15.4" fill="none" stroke="#9c9c9c" stroke-width="0.7" opacity=".6"/><g shape-rendering="crispEdges"><g fill="#cfe0ee"><rect x="6" y="2" width="9" height="1"/><rect x="6" y="4" width="9" height="1"/><rect x="6" y="6" width="9" height="1"/><rect x="6" y="8" width="9" height="1"/><rect x="6" y="10" width="9" height="1"/><rect x="6" y="12" width="9" height="1"/></g><rect x="6" y="1" width="1" height="14" fill="#f3d3e4"/><g fill="#6a747e"><rect x="4" y="2" width="1" height="1"/><rect x="4" y="4" width="1" height="1"/><rect x="4" y="6" width="1" height="1"/><rect x="4" y="8" width="1" height="1"/><rect x="4" y="10" width="1" height="1"/><rect x="4" y="12" width="1" height="1"/></g></g><rect x="3.6" y="8.6" width="13" height="6.6" fill="#fdfdfd" opacity=".9"/><text x="10.2" y="14" font-family="'DejaVu Sans',sans-serif" font-size="7.6" font-weight="bold" fill="#1a86a6" text-anchor="middle" textLength="12.6" lengthAdjust="spacingAndGlyphs">qml</text></svg>
<div class="t" style="left:97px;top:280px;font-size:12.3px;color:#1a1a1a;"><span class="bl"></span>SamegameText.qml</div>
<svg style="left:74px;top:304px" width="17" height="16" viewBox="0 0 17 16"><path d="M2.8 0.9 L15.2 0.9 L15.2 15 L2.8 15 Z" fill="#fdfdfd" stroke="#bdbdbd" stroke-width="0.9"/><path d="M2.4 1.2 L2.4 15.4 L14.8 15.4" fill="none" stroke="#9c9c9c" stroke-width="0.7" opacity=".6"/><g shape-rendering="crispEdges"><g fill="#cfe0ee"><rect x="6" y="2" width="9" height="1"/><rect x="6" y="4" width="9" height="1"/><rect x="6" y="6" width="9" height="1"/><rect x="6" y="8" width="9" height="1"/><rect x="6" y="10" width="9" height="1"/><rect x="6" y="12" width="9" height="1"/></g><rect x="6" y="1" width="1" height="14" fill="#f3d3e4"/><g fill="#6a747e"><rect x="4" y="2" width="1" height="1"/><rect x="4" y="4" width="1" height="1"/><rect x="4" y="6" width="1" height="1"/><rect x="4" y="8" width="1" height="1"/><rect x="4" y="10" width="1" height="1"/><rect x="4" y="12" width="1" height="1"/></g></g><rect x="3.6" y="8.6" width="13" height="6.6" fill="#fdfdfd" opacity=".9"/><text x="10.2" y="14" font-family="'DejaVu Sans',sans-serif" font-size="7.6" font-weight="bold" fill="#1a86a6" text-anchor="middle" textLength="12.6" lengthAdjust="spacingAndGlyphs">qml</text></svg>
<div class="t" style="left:97px;top:296px;font-size:12.3px;color:#1a1a1a;"><span class="bl"></span>Settings.qml</div>
<svg style="left:74px;top:320px" width="17" height="16" viewBox="0 0 17 16"><path d="M2.8 0.9 L15.2 0.9 L15.2 15 L2.8 15 Z" fill="#fdfdfd" stroke="#bdbdbd" stroke-width="0.9"/><path d="M2.4 1.2 L2.4 15.4 L14.8 15.4" fill="none" stroke="#9c9c9c" stroke-width="0.7" opacity=".6"/><g shape-rendering="crispEdges"><g fill="#cfe0ee"><rect x="6" y="2" width="9" height="1"/><rect x="6" y="4" width="9" height="1"/><rect x="6" y="6" width="9" height="1"/><rect x="6" y="8" width="9" height="1"/><rect x="6" y="10" width="9" height="1"/><rect x="6" y="12" width="9" height="1"/></g><rect x="6" y="1" width="1" height="14" fill="#f3d3e4"/><g fill="#6a747e"><rect x="4" y="2" width="1" height="1"/><rect x="4" y="4" width="1" height="1"/><rect x="4" y="6" width="1" height="1"/><rect x="4" y="8" width="1" height="1"/><rect x="4" y="10" width="1" height="1"/><rect x="4" y="12" width="1" height="1"/></g></g><rect x="3.6" y="8.6" width="13" height="6.6" fill="#fdfdfd" opacity=".9"/><text x="10.2" y="14" font-family="'DejaVu Sans',sans-serif" font-size="7.6" font-weight="bold" fill="#1a86a6" text-anchor="middle" textLength="12.6" lengthAdjust="spacingAndGlyphs">qml</text></svg>
<div class="t" style="left:97px;top:312px;font-size:12.3px;color:#1a1a1a;"><span class="bl"></span>SimpleBlock.qml</div>
<div style="left:0px;top:336px;width:253px;height:16px;background:#3daee9;"></div>
<svg style="left:74px;top:336px" width="17" height="16" viewBox="0 0 17 16"><path d="M2.8 0.9 L15.2 0.9 L15.2 15 L2.8 15 Z" fill="#cfe6f8" stroke="#bdbdbd" stroke-width="0.9"/><path d="M2.4 1.2 L2.4 15.4 L14.8 15.4" fill="none" stroke="#9c9c9c" stroke-width="0.7" opacity=".6"/><g shape-rendering="crispEdges"><g fill="#cfe0ee"><rect x="6" y="2" width="9" height="1"/><rect x="6" y="4" width="9" height="1"/><rect x="6" y="6" width="9" height="1"/><rect x="6" y="8" width="9" height="1"/><rect x="6" y="10" width="9" height="1"/><rect x="6" y="12" width="9" height="1"/></g><rect x="6" y="1" width="1" height="14" fill="#f3d3e4"/><g fill="#6a747e"><rect x="4" y="2" width="1" height="1"/><rect x="4" y="4" width="1" height="1"/><rect x="4" y="6" width="1" height="1"/><rect x="4" y="8" width="1" height="1"/><rect x="4" y="10" width="1" height="1"/><rect x="4" y="12" width="1" height="1"/></g></g><rect x="3.6" y="8.6" width="13" height="6.6" fill="#cfe6f8" opacity=".9"/><text x="10.2" y="14" font-family="'DejaVu Sans',sans-serif" font-size="7.6" font-weight="bold" fill="#2b8fbe" text-anchor="middle" textLength="12.6" lengthAdjust="spacingAndGlyphs">qml</text></svg>
<div class="t" style="left:97px;top:328px;font-size:12.3px;color:#fff;"><span class="bl"></span>SmokeText.qml</div>
<svg style="left:56px;top:352px" width="17" height="16" viewBox="0 0 17 16"><path d="M2.8 0.9 L15.2 0.9 L15.2 15 L2.8 15 Z" fill="#fdfdfd" stroke="#bdbdbd" stroke-width="0.9"/><path d="M2.4 1.2 L2.4 15.4 L14.8 15.4" fill="none" stroke="#9c9c9c" stroke-width="0.7" opacity=".6"/><g shape-rendering="crispEdges"><g fill="#cfe0ee"><rect x="6" y="2" width="9" height="1"/><rect x="6" y="4" width="9" height="1"/><rect x="6" y="6" width="9" height="1"/><rect x="6" y="8" width="9" height="1"/><rect x="6" y="10" width="9" height="1"/><rect x="6" y="12" width="9" height="1"/></g><rect x="6" y="1" width="1" height="14" fill="#f3d3e4"/><g fill="#6a747e"><rect x="4" y="2" width="1" height="1"/><rect x="4" y="4" width="1" height="1"/><rect x="4" y="6" width="1" height="1"/><rect x="4" y="8" width="1" height="1"/><rect x="4" y="10" width="1" height="1"/><rect x="4" y="12" width="1" height="1"/></g></g><rect x="3.6" y="6.6" width="12" height="7" fill="#fdfdfd" opacity=".85"/><text x="7" y="13.2" font-family="'DejaVu Sans',sans-serif" font-size="8.5" font-weight="bold" fill="#3a48d8" text-anchor="middle">C</text><text x="12.4" y="12.4" font-family="'DejaVu Sans',sans-serif" font-size="5.5" font-weight="bold" fill="#3a48d8" text-anchor="middle" textLength="5.4" lengthAdjust="spacingAndGlyphs">++</text><path d="M11.4 15 L15.2 11.4 L11.4 11.4 Z" fill="#e6e6e6" stroke="#a0a0a0" stroke-width="0.6" opacity="0"/></svg>
<div class="t" style="left:79px;top:344px;font-size:12.3px;color:#1a1a1a;"><span class="bl"></span>main.cpp</div>
<svg style="left:56px;top:368px" width="17" height="16" viewBox="0 0 17 16"><path d="M2.8 0.9 L15.2 0.9 L15.2 15 L2.8 15 Z" fill="#fdfdfd" stroke="#bdbdbd" stroke-width="0.9"/><path d="M2.4 1.2 L2.4 15.4 L14.8 15.4" fill="none" stroke="#9c9c9c" stroke-width="0.7" opacity=".6"/><g shape-rendering="crispEdges"><g fill="#cfe0ee"><rect x="6" y="2" width="9" height="1"/><rect x="6" y="4" width="9" height="1"/><rect x="6" y="6" width="9" height="1"/><rect x="6" y="8" width="9" height="1"/><rect x="6" y="10" width="9" height="1"/><rect x="6" y="12" width="9" height="1"/></g><rect x="6" y="1" width="1" height="14" fill="#f3d3e4"/><g fill="#6a747e"><rect x="4" y="2" width="1" height="1"/><rect x="4" y="4" width="1" height="1"/><rect x="4" y="6" width="1" height="1"/><rect x="4" y="8" width="1" height="1"/><rect x="4" y="10" width="1" height="1"/><rect x="4" y="12" width="1" height="1"/></g></g><rect x="3.6" y="8.6" width="13" height="6.6" fill="#fdfdfd" opacity=".9"/><text x="10.2" y="14" font-family="'DejaVu Sans',sans-serif" font-size="7.6" font-weight="bold" fill="#1a86a6" text-anchor="middle" textLength="12.6" lengthAdjust="spacingAndGlyphs">qml</text></svg>
<div class="t" style="left:79px;top:360px;font-size:12.3px;color:#1a1a1a;"><span class="bl"></span>samegame.qml</div>
<svg style="left:56px;top:384px" width="17" height="16" viewBox="0 0 17 16"><path d="M2.8 0.9 L15.2 0.9 L15.2 15 L2.8 15 Z" fill="#fdfdfd" stroke="#bdbdbd" stroke-width="0.9"/><path d="M2.4 1.2 L2.4 15.4 L14.8 15.4" fill="none" stroke="#9c9c9c" stroke-width="0.7" opacity=".6"/><g shape-rendering="crispEdges"><g fill="#cfe0ee"><rect x="6" y="2" width="9" height="1"/><rect x="6" y="4" width="9" height="1"/><rect x="6" y="6" width="9" height="1"/><rect x="6" y="8" width="9" height="1"/><rect x="6" y="10" width="9" height="1"/><rect x="6" y="12" width="9" height="1"/></g><rect x="6" y="1" width="1" height="14" fill="#f3d3e4"/><g fill="#6a747e"><rect x="4" y="2" width="1" height="1"/><rect x="4" y="4" width="1" height="1"/><rect x="4" y="6" width="1" height="1"/><rect x="4" y="8" width="1" height="1"/><rect x="4" y="10" width="1" height="1"/><rect x="4" y="12" width="1" height="1"/></g></g><rect x="9.2" y="9.4" width="7" height="6.2" rx="1" fill="#7a4a10"/><path d="M10.8 9.4 L10.8 8 A1.9 1.9 0 0 1 14.6 8 L14.6 9.4" fill="none" stroke="#7a4a10" stroke-width="1.3"/><rect x="10.2" y="10.4" width="2" height="1.8" fill="#f2c230"/><rect x="13.2" y="10.4" width="2" height="1.8" fill="#f2c230"/><rect x="10.2" y="13" width="2" height="1.8" fill="#f2c230"/><rect x="13.2" y="13" width="2" height="1.8" fill="#f2c230"/></svg>
<div class="t" style="left:79px;top:376px;font-size:12.3px;color:#1a1a1a;"><span class="bl"></span>samegame.qrc</div>
</div>
<div style="left:71px;top:1140px;width:253px;height:14px;background:#d6d4d2;"></div>
<div style="left:71px;top:1140px;width:253px;height:1px;background:#b4b0ae;"></div>
<div style="left:71px;top:1141px;width:13px;height:13px;background:linear-gradient(#f2f1f0,#e4e2e0);"></div>
<div style="left:84px;top:1141px;width:1px;height:13px;background:#aaa6a4;"></div>
<div style="left:85px;top:1141px;width:150px;height:13px;background:linear-gradient(#f0efee,#e6e4e2);"></div>
<div style="left:235px;top:1141px;width:1px;height:13px;background:#aaa6a4;"></div>
<div style="left:310px;top:1141px;width:1px;height:13px;background:#aaa6a4;"></div>
<div style="left:311px;top:1141px;width:13px;height:13px;background:linear-gradient(#f2f1f0,#e4e2e0);"></div>
<svg style="left:75px;top:1143px;" width="5" height="8" viewBox="0 0 5 8"><path d="M4.6 0 L0.2 4 L4.6 8 Z" fill="#5a5654"/></svg>
<svg style="left:315px;top:1143px;" width="5" height="8" viewBox="0 0 5 8"><path d="M0.4 0 L4.8 4 L0.4 8 Z" fill="#5a5654"/></svg>
<div style="left:325px;top:20px;width:1534px;height:25px;background:#404244;"></div>
<svg style="left:333px;top:27px;" width="9" height="12" viewBox="0 0 9 12"><path d="M7 0.8 L1.4 6 L7 11.2" fill="none" stroke="#6b6d6f" stroke-width="1.2"/></svg>
<svg style="left:356px;top:27px;" width="9" height="12" viewBox="0 0 9 12"><path d="M2 0.8 L7.6 6 L2 11.2" fill="none" stroke="#6b6d6f" stroke-width="1.2"/></svg>
<svg style="left:379px;top:26px;" width="14" height="14" viewBox="0 0 14 14"><rect x="1" y="6.4" width="8" height="6.6" fill="#6b6d6f"/><rect x="4" y="8.6" width="2" height="2.6" fill="#404244"/><path d="M7.6 6.4 L7.6 4.4 A2.6 2.6 0 0 1 12.8 4.4 L12.8 5.6" fill="none" stroke="#6b6d6f" stroke-width="1.3"/></svg>
<svg style="left:401px;top:25px" width="17" height="16" viewBox="0 0 17 16"><path d="M2.8 0.9 L15.2 0.9 L15.2 15 L2.8 15 Z" fill="#fdfdfd" stroke="#bdbdbd" stroke-width="0.9"/><path d="M2.4 1.2 L2.4 15.4 L14.8 15.4" fill="none" stroke="#9c9c9c" stroke-width="0.7" opacity=".6"/><g shape-rendering="crispEdges"><g fill="#cfe0ee"><rect x="6" y="2" width="9" height="1"/><rect x="6" y="4" width="9" height="1"/><rect x="6" y="6" width="9" height="1"/><rect x="6" y="8" width="9" height="1"/><rect x="6" y="10" width="9" height="1"/><rect x="6" y="12" width="9" height="1"/></g><rect x="6" y="1" width="1" height="14" fill="#f3d3e4"/><g fill="#6a747e"><rect x="4" y="2" width="1" height="1"/><rect x="4" y="4" width="1" height="1"/><rect x="4" y="6" width="1" height="1"/><rect x="4" y="8" width="1" height="1"/><rect x="4" y="10" width="1" height="1"/><rect x="4" y="12" width="1" height="1"/></g></g><rect x="3.6" y="8.6" width="13" height="6.6" fill="#fdfdfd" opacity=".9"/><text x="10.2" y="14" font-family="'DejaVu Sans',sans-serif" font-size="7.6" font-weight="bold" fill="#1a86a6" text-anchor="middle" textLength="12.6" lengthAdjust="spacingAndGlyphs">qml</text></svg>
<div class="t" style="left:426px;top:17px;font-size:12.3px;color:#fff;"><span class="bl"></span>SmokeText.qml</div>
<svg style="left:611px;top:27px;" width="8" height="12" viewBox="0 0 8 12"><path d="M0.2 5 L4 0.6 L7.8 5 Z M0.2 7 L4 11.4 L7.8 7 Z" fill="#b8b8b8"/></svg>
<div style="left:624px;top:24px;width:1px;height:17px;background:#5a5c5e;"></div>
<svg style="left:631px;top:28px;" width="11" height="11" viewBox="0 0 11 11"><path d="M0.8 0.8 L10.2 10.2 M10.2 0.8 L0.8 10.2" stroke="#c4c4c4" stroke-width="1.2" fill="none"/></svg>
<div style="left:648px;top:24px;width:1px;height:17px;background:#5a5c5e;"></div>
<svg style="left:1698px;top:27px;" width="8" height="12" viewBox="0 0 8 12"><path d="M0.2 5 L4 0.6 L7.8 5 Z M0.2 7 L4 11.4 L7.8 7 Z" fill="#6b6d6f"/></svg>
<div style="left:1711px;top:24px;width:1px;height:17px;background:#5a5c5e;"></div>
<div class="t" style="left:1715px;top:17px;font-size:12.3px;color:#fff;"><span class="bl"></span>Line: 62, Col: 40</div>
<svg style="left:1840px;top:27px;" width="15" height="14" viewBox="0 0 15 14"><g fill="none" stroke="#c4c4c4" stroke-width="1"><rect x="0.5" y="1.5" width="7" height="10"/><path d="M0.5 6.5 L7.5 6.5"/><path d="M9.5 7.5 L14.5 7.5 M12 5 L12 10" stroke-width="1.2"/></g></svg>
<div style="left:325px;top:45px;width:1534px;height:546px;overflow:hidden;background:#fff">
<div style="left:0px;top:0px;width:117px;height:546px;background:#d6d2d0;"></div>
<div style="left:1121px;top:0px;width:399px;height:546px;background:#efefef;"></div>
<div style="left:1121px;top:0px;width:1px;height:546px;background:#d8d8d8;"></div>
<div style="left:1122px;top:0px;width:398px;height:1px;background:#fbfbfb;"></div>
<div class="t m" style="left:0px;top:-4px;font-size:15px;color:#8e8a88;width:92px;text-align:right;letter-spacing:0.96875px;transform:scaleY(0.9);transform-origin:0 100%;"><span class="bl"></span>49</div>
<svg style="left:102px;top:7px;" width="10" height="6" viewBox="0 0 10 6"><path d="M0.3 0.4 L9.7 0.4 L5 5.6 Z" fill="#5a5452"/></svg>
<div class="t m code" style="left:121px;top:-4px;font-size:15px;color:#000;"><span class="bl"></span>    <span class="k">function</span> <span class="i">play</span>() {</div>
<div class="t m" style="left:0px;top:16px;font-size:15px;color:#8e8a88;width:92px;text-align:right;letter-spacing:0.96875px;transform:scaleY(0.9);transform-origin:0 100%;"><span class="bl"></span>50</div>
<div class="t m code" style="left:121px;top:16px;font-size:15px;color:#000;"><span class="bl"></span>        <span class="i">anim</span>.running = true;</div>
<div class="t m" style="left:0px;top:36px;font-size:15px;color:#8e8a88;width:92px;text-align:right;letter-spacing:0.96875px;transform:scaleY(0.9);transform-origin:0 100%;"><span class="bl"></span>51</div>
<div class="t m code" style="left:121px;top:36px;font-size:15px;color:#000;"><span class="bl"></span>    }</div>
<div class="pb" style="left:0;top:60px"></div>
<div class="t m" style="left:0px;top:56px;font-size:15px;color:#000;width:67px;text-align:right;letter-spacing:0.96875px;transform:scaleY(0.9);transform-origin:0 100%;"><span class="bl"></span>&lt;0.1%</div>
<div class="t m" style="left:0px;top:56px;font-size:15px;color:#8e8a88;width:92px;text-align:right;letter-spacing:0.96875px;transform:scaleY(0.9);transform-origin:0 100%;"><span class="bl"></span>52</div>
<div class="t m code" style="left:121px;top:56px;font-size:15px;color:#000;"><span class="bl"></span>    <span class="p">anchors.centerIn</span>: <span class="i">parent</span></div>
<div class="pb" style="left:0;top:80px"></div>
<div class="t m" style="left:0px;top:76px;font-size:15px;color:#000;width:67px;text-align:right;letter-spacing:0.96875px;transform:scaleY(0.9);transform-origin:0 100%;"><span class="bl"></span>~0.2%</div>
<div class="t m" style="left:0px;top:76px;font-size:15px;color:#8e8a88;width:92px;text-align:right;letter-spacing:0.96875px;transform:scaleY(0.9);transform-origin:0 100%;"><span class="bl"></span>53</div>
<svg style="left:102px;top:87px;" width="10" height="6" viewBox="0 0 10 6"><path d="M0.3 0.4 L9.7 0.4 L5 5.6 Z" fill="#5a5452"/></svg>
<div class="t m code" style="left:121px;top:76px;font-size:15px;color:#000;"><span class="bl"></span>    <span class="y">Image</span> {</div>
<div class="t m" style="left:0px;top:96px;font-size:15px;color:#8e8a88;width:92px;text-align:right;letter-spacing:0.96875px;transform:scaleY(0.9);transform-origin:0 100%;"><span class="bl"></span>54</div>
<div class="t m code" style="left:121px;top:96px;font-size:15px;color:#000;"><span class="bl"></span>        <span class="p">opacity</span>: 0</div>
<div class="t m" style="left:0px;top:116px;font-size:15px;color:#8e8a88;width:92px;text-align:right;letter-spacing:0.96875px;transform:scaleY(0.9);transform-origin:0 100%;"><span class="bl"></span>55</div>
<div class="t m code" style="left:121px;top:116px;font-size:15px;color:#000;"><span class="bl"></span>        <span class="p">id</span>: <span class="i hl">img</span></div>
<div class="pb" style="left:0;top:140px"></div>
<div class="t m" style="left:0px;top:136px;font-size:15px;color:#000;width:67px;text-align:right;letter-spacing:0.96875px;transform:scaleY(0.9);transform-origin:0 100%;"><span class="bl"></span>&lt;0.1%</div>
<div class="t m" style="left:0px;top:136px;font-size:15px;color:#8e8a88;width:92px;text-align:right;letter-spacing:0.96875px;transform:scaleY(0.9);transform-origin:0 100%;"><span class="bl"></span>56</div>
<div class="t m code" style="left:121px;top:136px;font-size:15px;color:#000;"><span class="bl"></span>        <span class="p">anchors.centerIn</span>: <span class="i">parent</span></div>
<div class="pb" style="left:0;top:160px"></div>
<div class="t m" style="left:0px;top:156px;font-size:15px;color:#000;width:67px;text-align:right;letter-spacing:0.96875px;transform:scaleY(0.9);transform-origin:0 100%;"><span class="bl"></span>&lt;0.1%</div>
<div class="t m" style="left:0px;top:156px;font-size:15px;color:#8e8a88;width:92px;text-align:right;letter-spacing:0.96875px;transform:scaleY(0.9);transform-origin:0 100%;"><span class="bl"></span>57</div>
<div class="t m code" style="left:121px;top:156px;font-size:15px;color:#000;"><span class="bl"></span>        <span class="p">rotation</span>: <span class="i">playerNum</span> == 1 ? -8 : -5</div>
<div class="pb" style="left:0;top:180px"></div>
<div class="t m" style="left:0px;top:176px;font-size:15px;color:#000;width:67px;text-align:right;letter-spacing:0.96875px;transform:scaleY(0.9);transform-origin:0 100%;"><span class="bl"></span>~0.2%</div>
<div class="t m" style="left:0px;top:176px;font-size:15px;color:#8e8a88;width:92px;text-align:right;letter-spacing:0.96875px;transform:scaleY(0.9);transform-origin:0 100%;"><span class="bl"></span>58</div>
<svg style="left:102px;top:187px;" width="10" height="6" viewBox="0 0 10 6"><path d="M0.3 0.4 L9.7 0.4 L5 5.6 Z" fill="#5a5452"/></svg>
<div class="t m code" style="left:121px;top:176px;font-size:15px;color:#000;"><span class="bl"></span>        <span class="y">Emitter</span> {</div>
<div class="t m" style="left:0px;top:196px;font-size:15px;color:#8e8a88;width:92px;text-align:right;letter-spacing:0.96875px;transform:scaleY(0.9);transform-origin:0 100%;"><span class="bl"></span>59</div>
<div class="t m code" style="left:121px;top:196px;font-size:15px;color:#000;"><span class="bl"></span>            <span class="p">id</span>: <span class="i">emitter</span></div>
<div class="t m" style="left:0px;top:216px;font-size:15px;color:#8e8a88;width:92px;text-align:right;letter-spacing:0.96875px;transform:scaleY(0.9);transform-origin:0 100%;"><span class="bl"></span>60</div>
<div class="t m code" style="left:121px;top:216px;font-size:15px;color:#000;"><span class="bl"></span>            <span class="p">group</span>: <span class="s">"smoke"</span></div>
<div class="pb" style="left:0;top:240px"></div>
<div class="t m" style="left:0px;top:236px;font-size:15px;color:#000;width:67px;text-align:right;letter-spacing:0.96875px;transform:scaleY(0.9);transform-origin:0 100%;"><span class="bl"></span>&lt;0.1%</div>
<div class="t m" style="left:0px;top:236px;font-size:15px;color:#8e8a88;width:92px;text-align:right;letter-spacing:0.96875px;transform:scaleY(0.9);transform-origin:0 100%;"><span class="bl"></span>61</div>
<div class="t m code" style="left:121px;top:236px;font-size:15px;color:#000;"><span class="bl"></span>            <span class="p">anchors.fill</span>: <span class="i">parent</span></div>
<div class="pb" style="left:0;top:260px"></div>
<div class="t m" style="left:0px;top:256px;font-size:15px;color:#000;width:67px;text-align:right;letter-spacing:0.96875px;transform:scaleY(0.9);transform-origin:0 100%;"><span class="bl"></span>≥9.7%</div>
<div class="t m" style="left:0px;top:256px;font-size:15px;color:#7c7c7c;font-weight:bold;width:92px;text-align:right;letter-spacing:0.96875px;transform:scaleY(0.9);transform-origin:0 100%;"><span class="bl"></span>62</div>
<div class="t m code" style="left:121px;top:256px;font-size:15px;color:#000;"><span class="bl"></span>            <span class="p">shape</span>: <span class="y">MaskShape</span> { <span class="p">source</span>: <span class="i hl">img</span>.source }</div>
<div class="t m" style="left:0px;top:276px;font-size:15px;color:#8e8a88;width:92px;text-align:right;letter-spacing:0.96875px;transform:scaleY(0.9);transform-origin:0 100%;"><span class="bl"></span>63</div>
<div class="t m code" style="left:121px;top:276px;font-size:15px;color:#000;"><span class="bl"></span>            <span class="p">enabled</span>: false</div>
<div class="t m" style="left:0px;top:296px;font-size:15px;color:#8e8a88;width:92px;text-align:right;letter-spacing:0.96875px;transform:scaleY(0.9);transform-origin:0 100%;"><span class="bl"></span>64</div>
<div class="t m code" style="left:121px;top:296px;font-size:15px;color:#000;"><span class="bl"></span>            <span class="p">emitRate</span>: 1000</div>
<div class="t m" style="left:0px;top:316px;font-size:15px;color:#8e8a88;width:92px;text-align:right;letter-spacing:0.96875px;transform:scaleY(0.9);transform-origin:0 100%;"><span class="bl"></span>65</div>
<div class="t m code" style="left:121px;top:316px;font-size:15px;color:#000;"><span class="bl"></span>            <span class="p">lifeSpan</span>: 600</div>
<div class="t m" style="left:0px;top:336px;font-size:15px;color:#8e8a88;width:92px;text-align:right;letter-spacing:0.96875px;transform:scaleY(0.9);transform-origin:0 100%;"><span class="bl"></span>66</div>
<div class="t m code" style="left:121px;top:336px;font-size:15px;color:#000;"><span class="bl"></span>            <span class="p">size</span>: 64</div>
<div class="t m" style="left:0px;top:356px;font-size:15px;color:#8e8a88;width:92px;text-align:right;letter-spacing:0.96875px;transform:scaleY(0.9);transform-origin:0 100%;"><span class="bl"></span>67</div>
<div class="t m code" style="left:121px;top:356px;font-size:15px;color:#000;"><span class="bl"></span>            <span class="p">endSize</span>: 32</div>
<div class="pb" style="left:0;top:380px"></div>
<div class="t m" style="left:0px;top:376px;font-size:15px;color:#000;width:67px;text-align:right;letter-spacing:0.96875px;transform:scaleY(0.9);transform-origin:0 100%;"><span class="bl"></span>&lt;0.1%</div>
<div class="t m" style="left:0px;top:376px;font-size:15px;color:#8e8a88;width:92px;text-align:right;letter-spacing:0.96875px;transform:scaleY(0.9);transform-origin:0 100%;"><span class="bl"></span>68</div>
<div class="t m code" style="left:121px;top:376px;font-size:15px;color:#000;"><span class="bl"></span>            <span class="p">velocity</span>: <span class="y">AngleDirection</span> { <span class="p">angleVariation</span>: 360; <span class="p">magnitudeVariation</span>: 160 }</div>
<div class="t m" style="left:0px;top:396px;font-size:15px;color:#8e8a88;width:92px;text-align:right;letter-spacing:0.96875px;transform:scaleY(0.9);transform-origin:0 100%;"><span class="bl"></span>69</div>
<div class="t m code" style="left:121px;top:396px;font-size:15px;color:#000;"><span class="bl"></span>        }</div>
<div class="t m" style="left:0px;top:416px;font-size:15px;color:#8e8a88;width:92px;text-align:right;letter-spacing:0.96875px;transform:scaleY(0.9);transform-origin:0 100%;"><span class="bl"></span>70</div>
<div class="t m code" style="left:121px;top:416px;font-size:15px;color:#000;"><span class="bl"></span>    }</div>
<div class="pb" style="left:0;top:440px"></div>
<div class="t m" style="left:0px;top:436px;font-size:15px;color:#000;width:67px;text-align:right;letter-spacing:0.96875px;transform:scaleY(0.9);transform-origin:0 100%;"><span class="bl"></span>~0.2%</div>
<div class="t m" style="left:0px;top:436px;font-size:15px;color:#8e8a88;width:92px;text-align:right;letter-spacing:0.96875px;transform:scaleY(0.9);transform-origin:0 100%;"><span class="bl"></span>71</div>
<svg style="left:102px;top:447px;" width="10" height="6" viewBox="0 0 10 6"><path d="M0.3 0.4 L9.7 0.4 L5 5.6 Z" fill="#5a5452"/></svg>
<div class="t m code" style="left:121px;top:436px;font-size:15px;color:#000;"><span class="bl"></span>    <span class="y">SequentialAnimation</span> {</div>
<div class="t m" style="left:0px;top:456px;font-size:15px;color:#8e8a88;width:92px;text-align:right;letter-spacing:0.96875px;transform:scaleY(0.9);transform-origin:0 100%;"><span class="bl"></span>72</div>
<div class="t m code" style="left:121px;top:456px;font-size:15px;color:#000;"><span class="bl"></span>        <span class="p">id</span>: <span class="i">anim</span></div>
<div class="t m" style="left:0px;top:476px;font-size:15px;color:#8e8a88;width:92px;text-align:right;letter-spacing:0.96875px;transform:scaleY(0.9);transform-origin:0 100%;"><span class="bl"></span>73</div>
<div class="t m code" style="left:121px;top:476px;font-size:15px;color:#000;"><span class="bl"></span>        <span class="p">running</span>: false</div>
<div class="pb" style="left:0;top:500px"></div>
<div class="t m" style="left:0px;top:496px;font-size:15px;color:#000;width:67px;text-align:right;letter-spacing:0.96875px;transform:scaleY(0.9);transform-origin:0 100%;"><span class="bl"></span>&lt;0.1%</div>
<div class="t m" style="left:0px;top:496px;font-size:15px;color:#8e8a88;width:92px;text-align:right;letter-spacing:0.96875px;transform:scaleY(0.9);transform-origin:0 100%;"><span class="bl"></span>74</div>
<div class="t m code" style="left:121px;top:496px;font-size:15px;color:#000;"><span class="bl"></span>        <span class="y">PauseAnimation</span> { <span class="p">duration</span>: 500}</div>
<div class="pb" style="left:0;top:520px"></div>
<div class="t m" style="left:0px;top:516px;font-size:15px;color:#000;width:67px;text-align:right;letter-spacing:0.96875px;transform:scaleY(0.9);transform-origin:0 100%;"><span class="bl"></span>&lt;0.1%</div>
<div class="t m" style="left:0px;top:516px;font-size:15px;color:#8e8a88;width:92px;text-align:right;letter-spacing:0.96875px;transform:scaleY(0.9);transform-origin:0 100%;"><span class="bl"></span>75</div>
<svg style="left:102px;top:527px;" width="10" height="6" viewBox="0 0 10 6"><path d="M0.3 0.4 L9.7 0.4 L5 5.6 Z" fill="#5a5452"/></svg>
<div class="t m code" style="left:121px;top:516px;font-size:15px;color:#000;"><span class="bl"></span>        <span class="y">ParallelAnimation</span> {</div>
<div class="pb" style="left:0;top:540px"></div>
<div class="t m" style="left:0px;top:536px;font-size:15px;color:#000;width:67px;text-align:right;letter-spacing:0.96875px;transform:scaleY(0.9);transform-origin:0 100%;"><span class="bl"></span>&lt;0.1%</div>
<div class="t m" style="left:0px;top:536px;font-size:15px;color:#8e8a88;width:92px;text-align:right;letter-spacing:0.96875px;transform:scaleY(0.9);transform-origin:0 100%;"><span class="bl"></span>76</div>
<div class="t m code" style="left:121px;top:536px;font-size:15px;color:#000;"><span class="bl"></span>            <span class="y">NumberAnimation</span> { <span class="p">target</span>: <span class="i hl">img</span>; <span class="p">property</span>: <span class="s">"opacity"</span>; <span class="p">from</span>: 0.1; <span class="p">to</span>: 1.0 }</div>
<div style="left:27px;top:293px;width:309px;height:48px;background:#141312;border:1px solid #b8d8dc;box-sizing:border-box;"></div>
<div class="t" style="left:31px;top:287px;font-size:12.45px;color:#fff;"><span class="bl"></span>Creating</div>
<div class="t" style="left:102px;top:287px;font-size:12.45px;color:#fff;"><span class="bl"></span>QtQuick.Particles/MaskShape</div>
<div class="t" style="left:233px;top:287px;font-size:12.45px;color:#fff;width:100px;text-align:right;"><span class="bl"></span>0.03%</div>
<div class="t" style="left:31px;top:301px;font-size:12.45px;color:#fff;"><span class="bl"></span>JavaScript</div>
<div class="t" style="left:102px;top:301px;font-size:12.45px;color:#fff;"><span class="bl"></span>expression for source</div>
<div class="t" style="left:233px;top:301px;font-size:12.45px;color:#fff;width:100px;text-align:right;"><span class="bl"></span>0.03%</div>
<div class="t" style="left:31px;top:315px;font-size:12.45px;color:#fff;"><span class="bl"></span>Binding</div>
<div class="t" style="left:102px;top:315px;font-size:12.45px;color:#fff;"><span class="bl"></span>source: img.source</div>
<div class="t" style="left:233px;top:315px;font-size:12.45px;color:#fff;width:100px;text-align:right;"><span class="bl"></span>9.80%</div>
<div style="left:1520px;top:0px;width:14px;height:546px;background:#d6d4d2;"></div>
<div style="left:1520px;top:0px;width:1px;height:546px;background:#aaa6a4;"></div>
<div style="left:1521px;top:0px;width:13px;height:13px;background:linear-gradient(90deg,#f4f3f2,#e9e7e5 50%,#dedcda);"></div>
<div style="left:1521px;top:13px;width:13px;height:1px;background:#aaa6a4;"></div>
<div style="left:1521px;top:126px;width:13px;height:1px;background:#aaa6a4;"></div>
<div style="left:1521px;top:127px;width:13px;height:292px;background:linear-gradient(90deg,#f4f3f2,#e9e7e5 50%,#dedcda);"></div>
<div style="left:1521px;top:419px;width:13px;height:1px;background:#aaa6a4;"></div>
<div style="left:1521px;top:532px;width:13px;height:1px;background:#aaa6a4;"></div>
<div style="left:1521px;top:533px;width:13px;height:13px;background:linear-gradient(90deg,#f4f3f2,#e9e7e5 50%,#dedcda);"></div>
<svg style="left:1523px;top:4px;" width="9" height="6" viewBox="0 0 9 6"><path d="M0 5 L4.5 0.4 L9 5 Z" fill="#5a5654"/></svg>
<svg style="left:1523px;top:537px;" width="9" height="6" viewBox="0 0 9 6"><path d="M0 0.2 L9 0.2 L4.5 4.8 Z" fill="#5a5654"/></svg>
</div>
<div style="left:325px;top:591px;width:1534px;height:25px;background:#404244;"></div>
<div style="left:325px;top:615px;width:1534px;height:1px;background:#2f3032;"></div>
<div class="t" style="left:330px;top:587px;font-size:12.3px;color:#fff;letter-spacing:-0.12px;"><span class="bl"></span>QML Profiler</div>
<svg style="left:471px;top:599px;" width="8" height="12" viewBox="0 0 8 12"><path d="M0.2 5 L4 0.6 L7.8 5 Z M0.2 7 L4 11.4 L7.8 7 Z" fill="#b8b8b8"/></svg>
<div style="left:484px;top:595px;width:1px;height:17px;background:#5a5c5e;"></div>
<svg style="left:491px;top:596px;" width="14" height="15" viewBox="0 0 14 15"><path d="M0.9 0.3 L0.9 13.8 L11.6 7 Z" fill="#8cc06a"/><rect x="6" y="6" width="8" height="9" fill="#404244"/><g stroke="#d0d0d0" stroke-width="1" fill="none"><path d="M7.5 7 L7.5 14 M7 7.5 L13.4 7.5 M9.4 10.5 L12.4 10.5 M7 13.5 L13.4 13.5"/></g></svg>
<div style="left:515px;top:597px;width:12px;height:12px;background:#6b6d70;"></div>
<div style="left:533px;top:592px;width:24px;height:22px;background:#262728;"></div>
<svg style="left:537px;top:596px;" width="15" height="15" viewBox="0 0 15 15"><circle cx="7.85" cy="7.05" r="6.7" fill="#ee6868" stroke="#d9d9d9" stroke-width="0.9"/></svg>
<div style="left:557px;top:595px;width:1px;height:17px;background:#5a5c5e;"></div>
<svg style="left:560px;top:601px;" width="6" height="4" viewBox="0 0 6 4"><path d="M0 0.3 L6 0.3 L3 3.8 Z" fill="#c4c4c4"/></svg>
<svg style="left:573px;top:596px;" width="16" height="15" viewBox="0 0 16 15"><g fill="#c4c4c4"><path d="M6 0.5 L8 0.5 L8.4 6 L5.6 6 Z"/><path d="M4.4 6.8 L9.6 6.8 L11 13 L1.4 13 L3 9.6 Z"/></g><path d="M9.5 9.5 L14.5 9.5 L14.5 14.5 L11 14.5" fill="none" stroke="#c4c4c4" stroke-width="1"/></svg>
<svg style="left:598px;top:596px;" width="14" height="15" viewBox="0 0 14 15"><circle cx="8.4" cy="5.6" r="4" fill="none" stroke="#c4c4c4" stroke-width="1.3"/><path d="M5.6 8.6 L1 13.4" stroke="#c4c4c4" stroke-width="1.8" fill="none"/></svg>
<svg style="left:622px;top:597px;" width="14" height="14" viewBox="0 0 14 14"><path d="M0.5 1 L10.5 1 L6.6 5.8 L6.6 11.5 L4.4 9.8 L4.4 5.8 Z" fill="#c4c4c4"/><path d="M9.5 10 L13.5 10 L11.5 12.4 Z" fill="#c4c4c4"/></svg>
<div class="t" style="left:651px;top:587px;font-size:12.3px;color:#fff;letter-spacing:0.19px;"><span class="bl"></span>Elapsed:</div>
<div class="t" style="left:721px;top:587px;font-size:12.3px;color:#fff;letter-spacing:0.25px;"><span class="bl"></span>4.2 s</div>
<div style="left:1803px;top:594px;width:1px;height:19px;background:#5a5c5e;"></div>
<div class="t" style="left:1816px;top:587px;font-size:12.3px;color:#fff;"><span class="bl"></span>Views</div>
<div style="left:325px;top:616px;width:1534px;height:24px;background:#404244;"></div>
<div style="left:325px;top:640px;width:150px;height:437px;background:#404244;"></div>
<svg style="left:336px;top:622px;" width="9" height="13" viewBox="0 0 9 13"><path d="M7.4 0.6 L1.2 6.4 L7.4 12.2" fill="none" stroke="#eebc1c" stroke-width="1.5"/></svg>
<svg style="left:365px;top:622px;" width="9" height="13" viewBox="0 0 9 13"><path d="M1.6 0.6 L7.8 6.4 L1.6 12.2" fill="none" stroke="#eebc1c" stroke-width="1.5"/></svg>
<svg style="left:393px;top:621px;" width="14" height="15" viewBox="0 0 14 15"><circle cx="8.6" cy="5.6" r="4" fill="none" stroke="#c4c4c4" stroke-width="1.3"/><path d="M5.8 8.6 L1 13.6" stroke="#c4c4c4" stroke-width="1.8" fill="none"/></svg>
<svg style="left:423px;top:622px;" width="14" height="13" viewBox="0 0 14 13"><rect x="0.1" y="0" width="1.7" height="12.6" fill="#c4c4c4"/><rect x="12.2" y="0" width="1.7" height="12.6" fill="#c4c4c4"/><path d="M4 6.3 L10 6.3" stroke="#c4c4c4" stroke-width="1.3"/><path d="M2.6 6.3 L5.4 4 L5.4 8.6 Z M11.4 6.3 L8.6 4 L8.6 8.6 Z" fill="#c4c4c4"/></svg>
<svg style="left:454px;top:621px;" width="14" height="15" viewBox="0 0 14 15"><g fill="#c4c4c4"><rect x="0" y="0.5" width="3" height="5"/><rect x="0" y="7" width="3" height="5.5"/><rect x="4.5" y="0.5" width="3" height="2"/><rect x="9" y="0.5" width="3" height="3"/><path d="M5.5 4 L12.5 10.4 L9.6 10.6 L11.2 14 L9.8 14.6 L8.2 11.2 L5.8 13 Z"/></g></svg>
<div style="left:476px;top:616px;width:1383px;height:24px;overflow:hidden">
<div style="left:-12px;top:0px;width:1px;height:24px;background:#d8d8d8;"></div>
<div class="t rl" style="left:-10px;top:-5px;font-size:8px;color:#fff;"><span class="bl"></span>25.2ms</div>
<div style="left:96px;top:0px;width:1px;height:24px;background:#d8d8d8;"></div>
<div class="t rl" style="left:98px;top:-5px;font-size:8px;color:#fff;"><span class="bl"></span>29.4ms</div>
<div style="left:204px;top:0px;width:1px;height:24px;background:#d8d8d8;"></div>
<div class="t rl" style="left:206px;top:-5px;font-size:8px;color:#fff;"><span class="bl"></span>33.6ms</div>
<div style="left:312px;top:0px;width:1px;height:24px;background:#d8d8d8;"></div>
<div class="t rl" style="left:314px;top:-5px;font-size:8px;color:#fff;"><span class="bl"></span>37.7ms</div>
<div style="left:421px;top:0px;width:1px;height:24px;background:#d8d8d8;"></div>
<div class="t rl" style="left:423px;top:-5px;font-size:8px;color:#fff;"><span class="bl"></span>41.9ms</div>
<div style="left:529px;top:0px;width:1px;height:24px;background:#d8d8d8;"></div>
<div class="t rl" style="left:531px;top:-5px;font-size:8px;color:#fff;"><span class="bl"></span>46.1ms</div>
<div style="left:637px;top:0px;width:1px;height:24px;background:#d8d8d8;"></div>
<div class="t rl" style="left:639px;top:-5px;font-size:8px;color:#fff;"><span class="bl"></span>50.3ms</div>
<div style="left:745px;top:0px;width:1px;height:24px;background:#d8d8d8;"></div>
<div class="t rl" style="left:747px;top:-5px;font-size:8px;color:#fff;"><span class="bl"></span>54.5ms</div>
<div style="left:853px;top:0px;width:1px;height:24px;background:#d8d8d8;"></div>
<div class="t rl" style="left:855px;top:-5px;font-size:8px;color:#fff;"><span class="bl"></span>58.7ms</div>
<div style="left:961px;top:0px;width:1px;height:24px;background:#d8d8d8;"></div>
<div class="t rl" style="left:963px;top:-5px;font-size:8px;color:#fff;"><span class="bl"></span>62.9ms</div>
<div style="left:1070px;top:0px;width:1px;height:24px;background:#d8d8d8;"></div>
<div class="t rl" style="left:1072px;top:-5px;font-size:8px;color:#fff;"><span class="bl"></span>67.1ms</div>
<div style="left:1178px;top:0px;width:1px;height:24px;background:#d8d8d8;"></div>
<div class="t rl" style="left:1180px;top:-5px;font-size:8px;color:#fff;"><span class="bl"></span>71.3ms</div>
<div style="left:1286px;top:0px;width:1px;height:24px;background:#d8d8d8;"></div>
<div class="t rl" style="left:1288px;top:-5px;font-size:8px;color:#fff;"><span class="bl"></span>75.5ms</div>
</div>
<div class="t" style="left:330px;top:629px;font-size:12.3px;color:#fff;"><span class="bl"></span>Creating</div>
<svg style="left:454px;top:638px;" width="15" height="14" viewBox="0 0 15 14"><g fill="none" stroke="#c4c4c4" stroke-width="1"><rect x="0.5" y="1.5" width="7" height="10"/><path d="M0.5 6.5 L7.5 6.5"/><path d="M9.5 7.5 L14.5 7.5 M12 5 L12 10" stroke-width="1.2"/></g></svg>
<div class="t" style="left:330px;top:929px;font-size:12.3px;color:#fff;"><span class="bl"></span>Binding</div>
<svg style="left:454px;top:938px;" width="15" height="14" viewBox="0 0 15 14"><g fill="none" stroke="#c4c4c4" stroke-width="1"><rect x="0.5" y="1.5" width="7" height="10"/><path d="M0.5 6.5 L7.5 6.5"/><path d="M9.5 7.5 L14.5 7.5 M12 5 L12 10" stroke-width="1.2"/></g></svg>
<div class="t" style="left:330px;top:1049px;font-size:12.3px;color:#fff;"><span class="bl"></span>Handling Signal</div>
<svg style="left:454px;top:1058px;" width="15" height="14" viewBox="0 0 15 14"><g fill="none" stroke="#c4c4c4" stroke-width="1"><rect x="0.5" y="1.5" width="7" height="10"/><path d="M0.5 6.5 L7.5 6.5"/><path d="M9.5 7.5 L14.5 7.5 M12 5 L12 10" stroke-width="1.2"/></g></svg>
<div style="left:325px;top:930px;width:150px;height:1px;background:#c8c8c8;"></div>
<div style="left:325px;top:1050px;width:150px;height:1px;background:#c8c8c8;"></div>
<div style="left:475px;top:640px;width:1369px;height:423px;overflow:hidden;background:#fff">
<div style="left:0px;top:1px;width:1370px;height:19px;background:#f6f6f6;"></div>
<div style="left:0px;top:50px;width:1370px;height:30px;background:#f6f6f6;"></div>
<div style="left:0px;top:110px;width:1370px;height:30px;background:#f6f6f6;"></div>
<div style="left:0px;top:170px;width:1370px;height:30px;background:#f6f6f6;"></div>
<div style="left:0px;top:230px;width:1370px;height:30px;background:#f6f6f6;"></div>
<div style="left:0px;top:291px;width:1370px;height:29px;background:#f6f6f6;"></div>
<div style="left:0px;top:350px;width:1370px;height:30px;background:#f6f6f6;"></div>
<div style="left:0px;top:411px;width:1370px;height:12px;background:#f6f6f6;"></div>
<div style="left:0px;top:290px;width:1370px;height:1px;background:#d4d4d4;"></div>
<div style="left:0px;top:410px;width:1370px;height:1px;background:#d4d4d4;"></div>
<svg style="left:0;top:0" width="1370" height="423" viewBox="0 0 1370 423" shape-rendering="crispEdges"><rect x="11" y="0" width="1" height="423" fill="#d4d4d4"/><rect x="32" y="0" width="1" height="423" fill="#d4d4d4"/><rect x="54" y="0" width="1" height="423" fill="#d4d4d4"/><rect x="76" y="0" width="1" height="423" fill="#d4d4d4"/><rect x="97" y="0" width="1" height="423" fill="#d4d4d4"/><rect x="119" y="0" width="1" height="423" fill="#d4d4d4"/><rect x="140" y="0" width="1" height="423" fill="#d4d4d4"/><rect x="162" y="0" width="1" height="423" fill="#d4d4d4"/><rect x="184" y="0" width="1" height="423" fill="#d4d4d4"/><rect x="205" y="0" width="1" height="423" fill="#d4d4d4"/><rect x="227" y="0" width="1" height="423" fill="#d4d4d4"/><rect x="249" y="0" width="1" height="423" fill="#d4d4d4"/><rect x="270" y="0" width="1" height="423" fill="#d4d4d4"/><rect x="292" y="0" width="1" height="423" fill="#d4d4d4"/><rect x="313" y="0" width="1" height="423" fill="#d4d4d4"/><rect x="335" y="0" width="1" height="423" fill="#d4d4d4"/><rect x="357" y="0" width="1" height="423" fill="#d4d4d4"/><rect x="378" y="0" width="1" height="423" fill="#d4d4d4"/><rect x="400" y="0" width="1" height="423" fill="#d4d4d4"/><rect x="422" y="0" width="1" height="423" fill="#d4d4d4"/><rect x="443" y="0" width="1" height="423" fill="#d4d4d4"/><rect x="465" y="0" width="1" height="423" fill="#d4d4d4"/><rect x="487" y="0" width="1" height="423" fill="#d4d4d4"/><rect x="508" y="0" width="1" height="423" fill="#d4d4d4"/><rect x="530" y="0" width="1" height="423" fill="#d4d4d4"/><rect x="551" y="0" width="1" height="423" fill="#d4d4d4"/><rect x="573" y="0" width="1" height="423" fill="#d4d4d4"/><rect x="595" y="0" width="1" height="423" fill="#d4d4d4"/><rect x="616" y="0" width="1" height="423" fill="#d4d4d4"/><rect x="638" y="0" width="1" height="423" fill="#d4d4d4"/><rect x="660" y="0" width="1" height="423" fill="#d4d4d4"/><rect x="681" y="0" width="1" height="423" fill="#d4d4d4"/><rect x="703" y="0" width="1" height="423" fill="#d4d4d4"/><rect x="724" y="0" width="1" height="423" fill="#d4d4d4"/><rect x="746" y="0" width="1" height="423" fill="#d4d4d4"/><rect x="768" y="0" width="1" height="423" fill="#d4d4d4"/><rect x="789" y="0" width="1" height="423" fill="#d4d4d4"/><rect x="811" y="0" width="1" height="423" fill="#d4d4d4"/><rect x="833" y="0" width="1" height="423" fill="#d4d4d4"/><rect x="854" y="0" width="1" height="423" fill="#d4d4d4"/><rect x="876" y="0" width="1" height="423" fill="#d4d4d4"/><rect x="898" y="0" width="1" height="423" fill="#d4d4d4"/><rect x="919" y="0" width="1" height="423" fill="#d4d4d4"/><rect x="941" y="0" width="1" height="423" fill="#d4d4d4"/><rect x="962" y="0" width="1" height="423" fill="#d4d4d4"/><rect x="984" y="0" width="1" height="423" fill="#d4d4d4"/><rect x="1006" y="0" width="1" height="423" fill="#d4d4d4"/><rect x="1027" y="0" width="1" height="423" fill="#d4d4d4"/><rect x="1049" y="0" width="1" height="423" fill="#d4d4d4"/><rect x="1071" y="0" width="1" height="423" fill="#d4d4d4"/><rect x="1092" y="0" width="1" height="423" fill="#d4d4d4"/><rect x="1114" y="0" width="1" height="423" fill="#d4d4d4"/><rect x="1135" y="0" width="1" height="423" fill="#d4d4d4"/><rect x="1157" y="0" width="1" height="423" fill="#d4d4d4"/><rect x="1179" y="0" width="1" height="423" fill="#d4d4d4"/><rect x="1200" y="0" width="1" height="423" fill="#d4d4d4"/><rect x="1222" y="0" width="1" height="423" fill="#d4d4d4"/><rect x="1244" y="0" width="1" height="423" fill="#d4d4d4"/><rect x="1265" y="0" width="1" height="423" fill="#d4d4d4"/><rect x="1287" y="0" width="1" height="423" fill="#d4d4d4"/><rect x="1309" y="0" width="1" height="423" fill="#d4d4d4"/><rect x="1330" y="0" width="1" height="423" fill="#d4d4d4"/><rect x="1352" y="0" width="1" height="423" fill="#d4d4d4"/><rect x="263" y="20" width="114" height="30" fill="#dab772"/><rect x="380" y="20" width="3" height="30" fill="#9172da"/><rect x="662" y="20" width="1" height="30" fill="#a672da"/><rect x="663" y="20" width="1" height="30" fill="#7272da"/><rect x="664" y="20" width="7" height="30" fill="#72dabd"/><rect x="671" y="20" width="1" height="30" fill="#7295da"/><rect x="672" y="20" width="6" height="30" fill="#72dac0"/><rect x="678" y="20" width="1" height="30" fill="#7295da"/><rect x="679" y="20" width="4" height="30" fill="#72dabd"/><rect x="683" y="20" width="1" height="30" fill="#7295da"/><rect x="684" y="20" width="3" height="30" fill="#72dab7"/><rect x="687" y="20" width="2" height="30" fill="#72da8c"/><rect x="689" y="20" width="13" height="30" fill="#9ada72"/><rect x="702" y="20" width="667" height="30" fill="#72dada"/><rect x="264" y="50" width="1" height="30" fill="#dad272"/><rect x="265" y="50" width="2" height="30" fill="#80da72"/><rect x="267" y="50" width="3" height="30" fill="#72da8c"/><rect x="270" y="50" width="48" height="30" fill="#72dac0"/><rect x="318" y="50" width="32" height="30" fill="#afda72"/><rect x="350" y="50" width="10" height="30" fill="#8cda72"/><rect x="360" y="50" width="11" height="30" fill="#9ada72"/><rect x="371" y="50" width="6" height="30" fill="#d272da"/><rect x="272" y="80" width="45" height="30" fill="#72c5da"/><rect x="317" y="80" width="1" height="30" fill="#dad272"/><rect x="318" y="80" width="11" height="30" fill="#83da72"/><rect x="329" y="80" width="5" height="30" fill="#da7287"/><rect x="334" y="80" width="15" height="30" fill="#a6da72"/><rect x="349" y="80" width="2" height="30" fill="#72da8c"/><rect x="351" y="80" width="2" height="30" fill="#72dab7"/><rect x="353" y="80" width="1" height="30" fill="#a672da"/><rect x="354" y="80" width="2" height="30" fill="#da72c0"/><rect x="356" y="80" width="2" height="30" fill="#da727a"/><rect x="358" y="80" width="3" height="30" fill="#ccda72"/><rect x="361" y="80" width="3" height="30" fill="#72da72"/><rect x="364" y="80" width="2" height="30" fill="#72da9d"/><rect x="366" y="80" width="3" height="30" fill="#72dacc"/><rect x="369" y="80" width="3" height="30" fill="#7295da"/><rect x="373" y="80" width="2" height="30" fill="#da72c0"/><rect x="375" y="80" width="2" height="30" fill="#daaf72"/><rect x="277" y="110" width="2" height="30" fill="#7272da"/><rect x="279" y="110" width="4" height="30" fill="#9d72da"/><rect x="283" y="110" width="8" height="30" fill="#da7295"/><rect x="291" y="110" width="7" height="30" fill="#b7da72"/><rect x="298" y="110" width="3" height="30" fill="#d2da72"/><rect x="301" y="110" width="2" height="30" fill="#9dda72"/><rect x="303" y="110" width="3" height="30" fill="#72afda"/><rect x="307" y="110" width="3" height="30" fill="#7295da"/><rect x="310" y="110" width="2" height="30" fill="#8372da"/><rect x="312" y="110" width="2" height="30" fill="#d272da"/><rect x="314" y="110" width="3" height="30" fill="#da7287"/><rect x="319" y="110" width="10" height="30" fill="#72da8c"/><rect x="329" y="110" width="2" height="30" fill="#da8372"/><rect x="331" y="110" width="3" height="30" fill="#dad772"/><rect x="334" y="110" width="6" height="30" fill="#7ada72"/><rect x="340" y="110" width="3" height="30" fill="#da72c0"/><rect x="343" y="110" width="3" height="30" fill="#da7272"/><rect x="346" y="110" width="3" height="30" fill="#dad272"/><rect x="351" y="110" width="2" height="30" fill="#727ada"/><rect x="353" y="110" width="4" height="30" fill="#72dada"/><rect x="357" y="110" width="1" height="30" fill="#da9572"/><rect x="358" y="110" width="2" height="30" fill="#72d2da"/><rect x="360" y="110" width="6" height="30" fill="#72da8c"/><rect x="366" y="110" width="2" height="30" fill="#72b7da"/><rect x="368" y="110" width="1" height="30" fill="#72da83"/><rect x="369" y="110" width="2" height="30" fill="#7272da"/><rect x="373" y="110" width="2" height="30" fill="#da728c"/><rect x="375" y="110" width="3" height="30" fill="#afda72"/><rect x="279" y="140" width="2" height="30" fill="#c972da"/><rect x="281" y="140" width="2" height="30" fill="#da72c0"/><rect x="283" y="140" width="2" height="30" fill="#da7a72"/><rect x="285" y="140" width="5" height="30" fill="#dad272"/><rect x="291" y="140" width="5" height="30" fill="#83da72"/><rect x="298" y="140" width="3" height="30" fill="#8cda72"/><rect x="301" y="140" width="2" height="30" fill="#72daaf"/><rect x="303" y="140" width="2" height="30" fill="#8cda72"/><rect x="306" y="140" width="3" height="30" fill="#83da72"/><rect x="309" y="140" width="2" height="30" fill="#9d72da"/><rect x="311" y="140" width="3" height="30" fill="#da72b7"/><rect x="314" y="140" width="4" height="30" fill="#daaf72"/><rect x="319" y="140" width="3" height="30" fill="#72ccda"/><rect x="322" y="140" width="4" height="30" fill="#72a6da"/><rect x="326" y="140" width="3" height="30" fill="#c072da"/><rect x="334" y="140" width="1" height="30" fill="#72da8c"/><rect x="335" y="140" width="3" height="30" fill="#c972da"/><rect x="339" y="140" width="1" height="30" fill="#72dab7"/><rect x="340" y="140" width="3" height="30" fill="#da728c"/><rect x="343" y="140" width="1" height="30" fill="#72da8c"/><rect x="344" y="140" width="2" height="30" fill="#da9572"/><rect x="346" y="140" width="1" height="30" fill="#72da8c"/><rect x="347" y="140" width="2" height="30" fill="#b7da72"/><rect x="351" y="140" width="9" height="30" fill="#72a9da"/><rect x="360" y="140" width="1" height="30" fill="#72da8c"/><rect x="361" y="140" width="2" height="30" fill="#9d72da"/><rect x="363" y="140" width="1" height="30" fill="#72dab7"/><rect x="364" y="140" width="4" height="30" fill="#9d72da"/><rect x="368" y="140" width="1" height="30" fill="#72dab7"/><rect x="369" y="140" width="2" height="30" fill="#9872da"/><rect x="292" y="170" width="2" height="30" fill="#72da7a"/><rect x="294" y="170" width="3" height="30" fill="#7287da"/><rect x="298" y="170" width="1" height="30" fill="#72da7a"/><rect x="299" y="170" width="2" height="30" fill="#7275da"/><rect x="302" y="170" width="1" height="30" fill="#72da7a"/><rect x="303" y="170" width="3" height="30" fill="#7287da"/><rect x="306" y="170" width="1" height="30" fill="#72da7a"/><rect x="307" y="170" width="2" height="30" fill="#727ada"/><rect x="322" y="170" width="3" height="30" fill="#727ada"/><rect x="325" y="170" width="1" height="30" fill="#da8372"/><rect x="326" y="170" width="1" height="30" fill="#b7da72"/><rect x="327" y="170" width="3" height="30" fill="#da72b7"/><rect x="334" y="170" width="1" height="30" fill="#72dab7"/><rect x="335" y="170" width="2" height="30" fill="#9d72da"/><rect x="339" y="170" width="1" height="30" fill="#72dab7"/><rect x="340" y="170" width="9" height="30" fill="#9d72da"/><rect x="360" y="170" width="5" height="30" fill="#72c5da"/><rect x="366" y="170" width="5" height="30" fill="#72c5da"/><rect x="292" y="200" width="2" height="30" fill="#72daa6"/><rect x="294" y="200" width="1" height="30" fill="#9d72da"/><rect x="295" y="200" width="2" height="30" fill="#dac072"/><rect x="298" y="200" width="1" height="30" fill="#72dab7"/><rect x="299" y="200" width="3" height="30" fill="#dac072"/><rect x="302" y="200" width="1" height="30" fill="#72dab7"/><rect x="303" y="200" width="3" height="30" fill="#dabb72"/><rect x="306" y="200" width="1" height="30" fill="#72da7a"/><rect x="307" y="200" width="3" height="30" fill="#dac072"/><rect x="324" y="200" width="2" height="30" fill="#9172da"/><rect x="326" y="200" width="1" height="30" fill="#72da72"/><rect x="327" y="200" width="2" height="30" fill="#9d72da"/><rect x="334" y="200" width="3" height="30" fill="#72c9da"/><rect x="339" y="200" width="1" height="30" fill="#72dab7"/><rect x="340" y="200" width="2" height="30" fill="#72c9da"/><rect x="343" y="200" width="2" height="30" fill="#72c9da"/><rect x="346" y="200" width="2" height="30" fill="#72c9da"/><rect x="360" y="200" width="5" height="30" fill="#7298da"/><rect x="366" y="200" width="5" height="30" fill="#7298da"/><rect x="293" y="230" width="1" height="30" fill="#72c9da"/><rect x="294" y="230" width="3" height="30" fill="#da729d"/><rect x="298" y="230" width="1" height="30" fill="#72c9da"/><rect x="299" y="230" width="2" height="30" fill="#da729d"/><rect x="302" y="230" width="1" height="30" fill="#72c9da"/><rect x="303" y="230" width="3" height="30" fill="#da729d"/><rect x="306" y="230" width="1" height="30" fill="#72c9da"/><rect x="307" y="230" width="2" height="30" fill="#da729d"/><rect x="334" y="230" width="3" height="30" fill="#7298da"/><rect x="340" y="230" width="2" height="30" fill="#7298da"/><rect x="343" y="230" width="2" height="30" fill="#7298da"/><rect x="346" y="230" width="2" height="30" fill="#7298da"/><rect x="361" y="230" width="4" height="30" fill="#7272da"/><rect x="366" y="230" width="5" height="30" fill="#7272da"/><rect x="335" y="260" width="2" height="30" fill="#7572da"/><rect x="340" y="260" width="2" height="30" fill="#7572da"/><rect x="343" y="260" width="2" height="30" fill="#7572da"/><rect x="346" y="260" width="2" height="30" fill="#7572da"/><rect x="377" y="320" width="2" height="30" fill="#83da72"/><rect x="379" y="320" width="1" height="30" fill="#72dab7"/><rect x="380" y="320" width="3" height="30" fill="#72a6da"/><rect x="383" y="320" width="1" height="30" fill="#b772da"/><rect x="384" y="320" width="1" height="30" fill="#b7da72"/><rect x="385" y="320" width="1" height="30" fill="#da8c72"/><rect x="386" y="320" width="1" height="30" fill="#da72c0"/><rect x="387" y="320" width="1" height="30" fill="#a672da"/><rect x="388" y="320" width="1" height="30" fill="#72daa6"/><rect x="389" y="320" width="1" height="30" fill="#da8372"/><rect x="390" y="320" width="1" height="30" fill="#dad272"/><rect x="391" y="320" width="2" height="30" fill="#72a9da"/><rect x="393" y="320" width="1" height="30" fill="#72dab7"/><rect x="394" y="320" width="2" height="30" fill="#d272da"/><rect x="396" y="320" width="1" height="30" fill="#b7da72"/><rect x="397" y="320" width="2" height="30" fill="#da728c"/><rect x="399" y="320" width="1" height="30" fill="#72dab7"/><rect x="400" y="320" width="1" height="30" fill="#da8372"/><rect x="401" y="320" width="1" height="30" fill="#729dda"/><rect x="402" y="320" width="1" height="30" fill="#dad272"/><rect x="403" y="320" width="2" height="30" fill="#72da72"/><rect x="405" y="320" width="1" height="30" fill="#b7da72"/><rect x="406" y="320" width="2" height="30" fill="#da72c9"/><rect x="408" y="320" width="1" height="30" fill="#b7da72"/><rect x="409" y="320" width="1" height="30" fill="#a672da"/><rect x="410" y="320" width="1" height="30" fill="#da7272"/><rect x="411" y="320" width="2" height="30" fill="#72dab7"/><rect x="413" y="320" width="1" height="30" fill="#d272da"/><rect x="414" y="320" width="1" height="30" fill="#da9d72"/><rect x="415" y="320" width="3" height="30" fill="#9172da"/><rect x="418" y="320" width="1" height="30" fill="#729dda"/><rect x="419" y="320" width="1" height="30" fill="#afda72"/><rect x="596" y="320" width="1" height="30" fill="#da9872"/><rect x="597" y="320" width="1" height="30" fill="#c9da72"/><rect x="625" y="320" width="1" height="30" fill="#dada72"/><rect x="640" y="320" width="1" height="30" fill="#dada72"/><rect x="656" y="320" width="1" height="30" fill="#da8772"/><rect x="657" y="320" width="1" height="30" fill="#8372da"/><rect x="658" y="320" width="1" height="30" fill="#da72a6"/><rect x="659" y="320" width="1" height="30" fill="#da8772"/><rect x="660" y="320" width="1" height="30" fill="#dac972"/><rect x="661" y="320" width="3" height="30" fill="#72da72"/><rect x="670" y="320" width="3" height="30" fill="#dac072"/><rect x="677" y="320" width="3" height="30" fill="#dac072"/><rect x="683" y="320" width="2" height="30" fill="#dac072"/><rect x="687" y="320" width="3" height="30" fill="#dac072"/><rect x="384" y="350" width="3" height="30" fill="#72da72"/><rect x="397" y="350" width="2" height="30" fill="#72da72"/><rect x="406" y="350" width="2" height="30" fill="#da8772"/><rect x="408" y="350" width="5" height="30" fill="#72dac0"/><rect x="413" y="350" width="2" height="30" fill="#9ada72"/><rect x="420" y="320" width="176" height="30" fill="#6000ff"/><rect x="424" y="324" width="168" height="22" fill="#72da8c"/><rect x="598" y="320" width="27" height="30" fill="#904dff"/><rect x="602" y="324" width="19" height="22" fill="#72da8c"/><rect x="626" y="320" width="14" height="30" fill="#904dff"/><rect x="630" y="324" width="6" height="22" fill="#72da8c"/><rect x="641" y="320" width="15" height="30" fill="#904dff"/><rect x="645" y="324" width="7" height="22" fill="#72da8c"/></svg>
</div>
<div style="left:911px;top:810px;width:310px;height:82px;background:#d6d6d6;"></div>
<div style="left:911px;top:810px;width:310px;height:20px;background:#515151;"></div>
<div class="t" style="left:919px;top:804px;font-size:12.3px;color:#fff;font-weight:bold;"><span class="bl"></span>Binding</div>
<svg style="left:1139px;top:814px;" width="15" height="14" viewBox="0 0 15 14"><g fill="none" stroke="#c4c4c4" stroke-width="1"><path d="M2.2 10.6 L3.2 7.6 L10.6 0.9 L12.6 2.9 L5.2 9.8 Z"/><path d="M9.4 2 L11.4 4"/><path d="M1 11.6 C1.4 13.4 3.6 13 4.6 11.6 C5.6 10.4 6.8 10.6 7.4 11.6 C8.2 12.8 9.6 12.8 10.6 11.8 C11.4 11 12.6 11.2 13.6 12.2"/></g></svg>
<svg style="left:1171px;top:814px;" width="10" height="13" viewBox="0 0 10 13"><rect x="0.6" y="5.6" width="8.2" height="6.6" fill="#c4c4c4"/><path d="M2.4 5.6 L2.4 3.6 A2.3 2.3 0 0 1 7 3.6 L7 5.6" fill="none" stroke="#c4c4c4" stroke-width="1.3"/><rect x="3.9" y="7.6" width="1.6" height="2.4" fill="#515151"/></svg>
<svg style="left:1201px;top:816px;" width="10" height="10" viewBox="0 0 10 10"><path d="M0.6 0.6 L9.4 9.4 M9.4 0.6 L0.6 9.4" stroke="#c4c4c4" stroke-width="1.1" fill="none"/></svg>
<div class="t" style="left:921px;top:826px;font-size:12.4px;color:#000;font-weight:bold;"><span class="bl"></span>Details:</div>
<div class="t" style="left:993px;top:826px;font-size:12.5px;color:#000;"><span class="bl"></span>source: img.source</div>
<div class="t" style="left:921px;top:845px;font-size:12.4px;color:#000;font-weight:bold;"><span class="bl"></span>Duration:</div>
<div class="t" style="left:993px;top:845px;font-size:12.5px;color:#000;"><span class="bl"></span>6.85ms</div>
<div class="t" style="left:921px;top:864px;font-size:12.4px;color:#000;font-weight:bold;"><span class="bl"></span>Location:</div>
<div class="t" style="left:993px;top:864px;font-size:12.5px;color:#000;"><span class="bl"></span>SmokeText.qml:62</div>
<svg style="left:1211px;top:882px;" width="10" height="10" viewBox="0 0 10 10"><path d="M10 0 L10 10 L0 10 Z" fill="#515151"/></svg>
<div style="left:1844px;top:640px;width:15px;height:437px;background:#fff;"></div>
<div style="left:1844px;top:641px;width:1px;height:436px;background:#aaa6a4;"></div>
<div style="left:1845px;top:641px;width:13px;height:422px;background:#d6d4d2;"></div>
<div style="left:1845px;top:641px;width:13px;height:13px;background:linear-gradient(90deg,#f4f3f2,#e9e7e5 50%,#dedcda);"></div>
<div style="left:1845px;top:654px;width:13px;height:1px;background:#aaa6a4;"></div>
<div style="left:1845px;top:798px;width:13px;height:1px;background:#aaa6a4;"></div>
<div style="left:1845px;top:799px;width:13px;height:104px;background:linear-gradient(90deg,#f4f3f2,#e9e7e5 50%,#dedcda);"></div>
<div style="left:1845px;top:903px;width:13px;height:1px;background:#aaa6a4;"></div>
<div style="left:1845px;top:1049px;width:13px;height:1px;background:#aaa6a4;"></div>
<div style="left:1845px;top:1050px;width:13px;height:13px;background:linear-gradient(90deg,#f4f3f2,#e9e7e5 50%,#dedcda);"></div>
<div style="left:1858px;top:641px;width:1px;height:436px;background:#f4f4f4;"></div>
<svg style="left:1847px;top:645px;" width="9" height="6" viewBox="0 0 9 6"><path d="M0 5 L4.5 0.4 L9 5 Z" fill="#5a5654"/></svg>
<svg style="left:1847px;top:1054px;" width="9" height="6" viewBox="0 0 9 6"><path d="M0 0.2 L9 0.2 L4.5 4.8 Z" fill="#5a5654"/></svg>
<div style="left:475px;top:1063px;width:1369px;height:14px;background:#d6d4d2;"></div>
<div style="left:475px;top:1063px;width:1px;height:15px;background:#fff;"></div>
<div style="left:476px;top:1063px;width:1368px;height:1px;background:#b4b0ae;"></div>
<div style="left:476px;top:1064px;width:13px;height:13px;background:linear-gradient(#f2f1f0,#e4e2e0);"></div>
<div style="left:489px;top:1064px;width:1px;height:13px;background:#aaa6a4;"></div>
<div style="left:490px;top:1064px;width:26px;height:13px;background:linear-gradient(#f0efee,#e6e4e2);"></div>
<div style="left:516px;top:1064px;width:1px;height:13px;background:#aaa6a4;"></div>
<div style="left:1830px;top:1064px;width:1px;height:13px;background:#aaa6a4;"></div>
<div style="left:1831px;top:1064px;width:13px;height:13px;background:linear-gradient(#f2f1f0,#e4e2e0);"></div>
<div style="left:1845px;top:1063px;width:13px;height:14px;background:#d6d2d0;"></div>
<div style="left:1845px;top:1063px;width:13px;height:1px;background:#aaa6a4;"></div>
<svg style="left:480px;top:1066px;" width="5" height="8" viewBox="0 0 5 8"><path d="M4.6 0 L0.2 4 L4.6 8 Z" fill="#5a5654"/></svg>
<svg style="left:1835px;top:1066px;" width="5" height="8" viewBox="0 0 5 8"><path d="M0.4 0 L4.8 4 L0.4 8 Z" fill="#5a5654"/></svg>
<div style="left:325px;top:1077px;width:1534px;height:52px;overflow:hidden;background:#f6f6f6">
<div style="left:0px;top:0px;width:150px;height:1px;background:#404244;"></div>
<div style="left:150px;top:0px;width:1384px;height:1px;background:#fff;"></div>
<div style="left:0px;top:1px;width:1534px;height:10px;background:#404244;"></div>
<div class="t rl2" style="left:1px;top:-11px;font-size:5.9px;color:#fff;"><span class="bl"></span>25.5ms</div>
<div style="left:96px;top:1px;width:1px;height:10px;background:#e8e8e8;"></div>
<div class="t rl2" style="left:98px;top:-11px;font-size:5.9px;color:#fff;"><span class="bl"></span>294ms</div>
<div style="left:193px;top:0px;width:1px;height:11px;background:#e8e8e8;"></div>
<div class="t rl2" style="left:195px;top:-11px;font-size:5.9px;color:#fff;"><span class="bl"></span>562ms</div>
<div style="left:290px;top:0px;width:1px;height:11px;background:#e8e8e8;"></div>
<div class="t rl2" style="left:292px;top:-11px;font-size:5.9px;color:#fff;"><span class="bl"></span>831ms</div>
<div style="left:387px;top:0px;width:1px;height:11px;background:#e8e8e8;"></div>
<div class="t rl2" style="left:389px;top:-11px;font-size:5.9px;color:#fff;"><span class="bl"></span>1.1s</div>
<div style="left:484px;top:0px;width:1px;height:11px;background:#e8e8e8;"></div>
<div class="t rl2" style="left:486px;top:-11px;font-size:5.9px;color:#fff;"><span class="bl"></span>1.37s</div>
<div style="left:581px;top:0px;width:1px;height:11px;background:#e8e8e8;"></div>
<div class="t rl2" style="left:583px;top:-11px;font-size:5.9px;color:#fff;"><span class="bl"></span>1.64s</div>
<div style="left:678px;top:0px;width:1px;height:11px;background:#e8e8e8;"></div>
<div class="t rl2" style="left:680px;top:-11px;font-size:5.9px;color:#fff;"><span class="bl"></span>1.9s</div>
<div style="left:775px;top:0px;width:1px;height:11px;background:#e8e8e8;"></div>
<div class="t rl2" style="left:777px;top:-11px;font-size:5.9px;color:#fff;"><span class="bl"></span>2.17s</div>
<div style="left:872px;top:0px;width:1px;height:11px;background:#e8e8e8;"></div>
<div class="t rl2" style="left:874px;top:-11px;font-size:5.9px;color:#fff;"><span class="bl"></span>2.44s</div>
<div style="left:969px;top:0px;width:1px;height:11px;background:#e8e8e8;"></div>
<div class="t rl2" style="left:971px;top:-11px;font-size:5.9px;color:#fff;"><span class="bl"></span>2.71s</div>
<div style="left:1066px;top:0px;width:1px;height:11px;background:#e8e8e8;"></div>
<div class="t rl2" style="left:1068px;top:-11px;font-size:5.9px;color:#fff;"><span class="bl"></span>2.98s</div>
<div style="left:1163px;top:0px;width:1px;height:11px;background:#e8e8e8;"></div>
<div class="t rl2" style="left:1165px;top:-11px;font-size:5.9px;color:#fff;"><span class="bl"></span>3.25s</div>
<div style="left:1260px;top:0px;width:1px;height:11px;background:#e8e8e8;"></div>
<div class="t rl2" style="left:1262px;top:-11px;font-size:5.9px;color:#fff;"><span class="bl"></span>3.52s</div>
<div style="left:1357px;top:0px;width:1px;height:11px;background:#e8e8e8;"></div>
<div class="t rl2" style="left:1359px;top:-11px;font-size:5.9px;color:#fff;"><span class="bl"></span>3.78s</div>
<div style="left:1454px;top:0px;width:1px;height:11px;background:#e8e8e8;"></div>
<div class="t rl2" style="left:1456px;top:-11px;font-size:5.9px;color:#fff;"><span class="bl"></span>4.05s</div>
<svg style="left:0;top:0" width="1534" height="52" viewBox="0 0 1534 52" shape-rendering="crispEdges"><rect x="24" y="11" width="1508" height="3" fill="#7272da"/><rect x="45" y="14" width="1487" height="4" fill="#8672da"/><rect x="24" y="11" width="2" height="3" fill="#da72b7"/><rect x="26" y="11" width="2" height="3" fill="#72dac0"/><rect x="29" y="11" width="5" height="3" fill="#af72da"/><rect x="51" y="11" width="3" height="3" fill="#da7295"/><rect x="6" y="11" width="2" height="2" fill="#daaf72"/><rect x="8" y="11" width="3" height="2" fill="#7295da"/><rect x="45" y="14" width="2" height="4" fill="#dada72"/><rect x="47" y="14" width="3" height="4" fill="#b772da"/><rect x="50" y="14" width="3" height="4" fill="#dada72"/><rect x="53" y="14" width="6" height="4" fill="#8c72da"/><rect x="59" y="14" width="3" height="4" fill="#a6da72"/><rect x="62" y="14" width="10" height="4" fill="#72daa6"/><rect x="86" y="14" width="1" height="4" fill="#72dada"/><rect x="92" y="14" width="1" height="4" fill="#7e8cda"/><rect x="98" y="14" width="1" height="4" fill="#72dada"/><rect x="104" y="14" width="1" height="4" fill="#72dada"/><rect x="110" y="14" width="1" height="4" fill="#72a6da"/><rect x="116" y="14" width="1" height="4" fill="#72dada"/><rect x="122" y="14" width="2" height="4" fill="#72dada"/><rect x="128" y="14" width="1" height="4" fill="#72a6da"/><rect x="134" y="14" width="2" height="4" fill="#7e8cda"/><rect x="140" y="14" width="1" height="4" fill="#72a6da"/><rect x="146" y="14" width="1" height="4" fill="#72dada"/><rect x="152" y="14" width="1" height="4" fill="#72dada"/><rect x="158" y="14" width="1" height="4" fill="#72dada"/><rect x="164" y="14" width="1" height="4" fill="#72dada"/><rect x="170" y="14" width="2" height="4" fill="#72dada"/><rect x="176" y="14" width="1" height="4" fill="#72dada"/><rect x="182" y="14" width="1" height="4" fill="#72dada"/><rect x="188" y="14" width="1" height="4" fill="#72dada"/><rect x="194" y="14" width="2" height="4" fill="#7e8cda"/><rect x="200" y="14" width="1" height="4" fill="#72a6da"/><rect x="206" y="14" width="1" height="4" fill="#72dada"/><rect x="212" y="14" width="1" height="4" fill="#72dada"/><rect x="218" y="14" width="1" height="4" fill="#72a6da"/><rect x="224" y="14" width="1" height="4" fill="#72a6da"/><rect x="230" y="14" width="2" height="4" fill="#7e8cda"/><rect x="236" y="14" width="1" height="4" fill="#72dada"/><rect x="242" y="14" width="1" height="4" fill="#7e8cda"/><rect x="248" y="14" width="1" height="4" fill="#7e8cda"/><rect x="254" y="14" width="1" height="4" fill="#72dada"/><rect x="260" y="14" width="1" height="4" fill="#72a6da"/><rect x="267" y="14" width="1" height="4" fill="#72dada"/><rect x="273" y="14" width="1" height="4" fill="#7e8cda"/><rect x="279" y="14" width="1" height="4" fill="#72dada"/><rect x="285" y="14" width="1" height="4" fill="#72dada"/><rect x="291" y="14" width="1" height="4" fill="#72a6da"/><rect x="297" y="14" width="1" height="4" fill="#72dada"/><rect x="303" y="14" width="1" height="4" fill="#72dada"/><rect x="309" y="14" width="1" height="4" fill="#72dada"/><rect x="315" y="14" width="1" height="4" fill="#72dada"/><rect x="321" y="14" width="1" height="4" fill="#72dada"/><rect x="327" y="14" width="2" height="4" fill="#7e8cda"/><rect x="333" y="14" width="2" height="4" fill="#72dada"/><rect x="339" y="14" width="1" height="4" fill="#72dada"/><rect x="345" y="14" width="1" height="4" fill="#72a6da"/><rect x="351" y="14" width="2" height="4" fill="#72dada"/><rect x="357" y="14" width="1" height="4" fill="#72dada"/><rect x="363" y="14" width="1" height="4" fill="#72a6da"/><rect x="369" y="14" width="1" height="4" fill="#72dada"/><rect x="375" y="14" width="1" height="4" fill="#72dada"/><rect x="381" y="14" width="1" height="4" fill="#72dada"/><rect x="387" y="14" width="1" height="4" fill="#72dada"/><rect x="393" y="14" width="1" height="4" fill="#7e8cda"/><rect x="399" y="14" width="2" height="4" fill="#72dada"/><rect x="405" y="14" width="1" height="4" fill="#72dada"/><rect x="411" y="14" width="2" height="4" fill="#7e8cda"/><rect x="417" y="14" width="1" height="4" fill="#72dada"/><rect x="423" y="14" width="2" height="4" fill="#72a6da"/><rect x="429" y="14" width="2" height="4" fill="#72dada"/><rect x="435" y="14" width="1" height="4" fill="#72a6da"/><rect x="441" y="14" width="1" height="4" fill="#72dada"/><rect x="447" y="14" width="2" height="4" fill="#72dada"/><rect x="453" y="14" width="1" height="4" fill="#72dada"/><rect x="459" y="14" width="2" height="4" fill="#72dada"/><rect x="465" y="14" width="1" height="4" fill="#72dada"/><rect x="471" y="14" width="1" height="4" fill="#72dada"/><rect x="477" y="14" width="1" height="4" fill="#72dada"/><rect x="483" y="14" width="2" height="4" fill="#72dada"/><rect x="489" y="14" width="1" height="4" fill="#72dada"/><rect x="495" y="14" width="1" height="4" fill="#7e8cda"/><rect x="501" y="14" width="1" height="4" fill="#72dada"/><rect x="507" y="14" width="1" height="4" fill="#72dada"/><rect x="513" y="14" width="1" height="4" fill="#72dada"/><rect x="519" y="14" width="1" height="4" fill="#72dada"/><rect x="525" y="14" width="2" height="4" fill="#72dada"/><rect x="531" y="14" width="1" height="4" fill="#7e8cda"/><rect x="537" y="14" width="1" height="4" fill="#72a6da"/><rect x="543" y="14" width="1" height="4" fill="#72dada"/><rect x="549" y="14" width="2" height="4" fill="#72dada"/><rect x="555" y="14" width="2" height="4" fill="#72a6da"/><rect x="561" y="14" width="1" height="4" fill="#72dada"/><rect x="567" y="14" width="1" height="4" fill="#72dada"/><rect x="574" y="14" width="2" height="4" fill="#72dada"/><rect x="580" y="14" width="1" height="4" fill="#72dada"/><rect x="586" y="14" width="2" height="4" fill="#72a6da"/><rect x="592" y="14" width="1" height="4" fill="#72a6da"/><rect x="598" y="14" width="2" height="4" fill="#72a6da"/><rect x="604" y="14" width="1" height="4" fill="#72dada"/><rect x="610" y="14" width="2" height="4" fill="#7e8cda"/><rect x="616" y="14" width="1" height="4" fill="#72dada"/><rect x="622" y="14" width="1" height="4" fill="#72a6da"/><rect x="628" y="14" width="1" height="4" fill="#72a6da"/><rect x="634" y="14" width="1" height="4" fill="#72dada"/><rect x="640" y="14" width="1" height="4" fill="#72dada"/><rect x="646" y="14" width="2" height="4" fill="#7e8cda"/><rect x="652" y="14" width="1" height="4" fill="#72a6da"/><rect x="658" y="14" width="1" height="4" fill="#72a6da"/><rect x="664" y="14" width="2" height="4" fill="#72dada"/><rect x="670" y="14" width="1" height="4" fill="#72dada"/><rect x="676" y="14" width="1" height="4" fill="#72dada"/><rect x="682" y="14" width="1" height="4" fill="#72dada"/><rect x="688" y="14" width="1" height="4" fill="#72a6da"/><rect x="694" y="14" width="2" height="4" fill="#72dada"/><rect x="700" y="14" width="1" height="4" fill="#72dada"/><rect x="706" y="14" width="1" height="4" fill="#72dada"/><rect x="712" y="14" width="1" height="4" fill="#72dada"/><rect x="718" y="14" width="1" height="4" fill="#7e8cda"/><rect x="724" y="14" width="2" height="4" fill="#72dada"/><rect x="730" y="14" width="1" height="4" fill="#72dada"/><rect x="736" y="14" width="1" height="4" fill="#72dada"/><rect x="742" y="14" width="2" height="4" fill="#72a6da"/><rect x="748" y="14" width="1" height="4" fill="#72a6da"/><rect x="754" y="14" width="1" height="4" fill="#72dada"/><rect x="760" y="14" width="1" height="4" fill="#72dada"/><rect x="766" y="14" width="2" height="4" fill="#72a6da"/><rect x="772" y="14" width="2" height="4" fill="#72a6da"/><rect x="778" y="14" width="1" height="4" fill="#72dada"/><rect x="784" y="14" width="1" height="4" fill="#72dada"/><rect x="790" y="14" width="1" height="4" fill="#72dada"/><rect x="796" y="14" width="1" height="4" fill="#72a6da"/><rect x="802" y="14" width="2" height="4" fill="#72dada"/><rect x="808" y="14" width="1" height="4" fill="#7e8cda"/><rect x="814" y="14" width="1" height="4" fill="#72dada"/><rect x="820" y="14" width="1" height="4" fill="#72a6da"/><rect x="826" y="14" width="1" height="4" fill="#72a6da"/><rect x="832" y="14" width="1" height="4" fill="#72dada"/><rect x="838" y="14" width="1" height="4" fill="#72dada"/><rect x="844" y="14" width="1" height="4" fill="#72dada"/><rect x="850" y="14" width="1" height="4" fill="#72a6da"/><rect x="856" y="14" width="1" height="4" fill="#72dada"/><rect x="862" y="14" width="1" height="4" fill="#72a6da"/><rect x="868" y="14" width="1" height="4" fill="#72a6da"/><rect x="875" y="14" width="2" height="4" fill="#72a6da"/><rect x="881" y="14" width="1" height="4" fill="#72a6da"/><rect x="887" y="14" width="1" height="4" fill="#72dada"/><rect x="893" y="14" width="1" height="4" fill="#72dada"/><rect x="899" y="14" width="1" height="4" fill="#72a6da"/><rect x="905" y="14" width="1" height="4" fill="#72dada"/><rect x="911" y="14" width="1" height="4" fill="#72a6da"/><rect x="917" y="14" width="1" height="4" fill="#72dada"/><rect x="923" y="14" width="1" height="4" fill="#72dada"/><rect x="929" y="14" width="1" height="4" fill="#7e8cda"/><rect x="935" y="14" width="1" height="4" fill="#7e8cda"/><rect x="941" y="14" width="1" height="4" fill="#72dada"/><rect x="947" y="14" width="2" height="4" fill="#72a6da"/><rect x="953" y="14" width="1" height="4" fill="#72dada"/><rect x="959" y="14" width="1" height="4" fill="#72a6da"/><rect x="965" y="14" width="1" height="4" fill="#7e8cda"/><rect x="971" y="14" width="1" height="4" fill="#72a6da"/><rect x="977" y="14" width="2" height="4" fill="#72a6da"/><rect x="983" y="14" width="1" height="4" fill="#72a6da"/><rect x="989" y="14" width="2" height="4" fill="#72dada"/><rect x="995" y="14" width="2" height="4" fill="#7e8cda"/><rect x="1001" y="14" width="1" height="4" fill="#72dada"/><rect x="1007" y="14" width="2" height="4" fill="#72dada"/><rect x="1013" y="14" width="1" height="4" fill="#72a6da"/><rect x="1019" y="14" width="1" height="4" fill="#72dada"/><rect x="1025" y="14" width="1" height="4" fill="#72dada"/><rect x="1031" y="14" width="1" height="4" fill="#72dada"/><rect x="1037" y="14" width="1" height="4" fill="#72a6da"/><rect x="1043" y="14" width="1" height="4" fill="#72a6da"/><rect x="1049" y="14" width="1" height="4" fill="#72dada"/><rect x="1055" y="14" width="1" height="4" fill="#72dada"/><rect x="1061" y="14" width="1" height="4" fill="#72dada"/><rect x="1067" y="14" width="1" height="4" fill="#72a6da"/><rect x="1073" y="14" width="1" height="4" fill="#7e8cda"/><rect x="1079" y="14" width="1" height="4" fill="#7e8cda"/><rect x="1085" y="14" width="1" height="4" fill="#72dada"/><rect x="1091" y="14" width="1" height="4" fill="#72dada"/><rect x="1097" y="14" width="1" height="4" fill="#72a6da"/><rect x="1103" y="14" width="1" height="4" fill="#72a6da"/><rect x="1109" y="14" width="1" height="4" fill="#72dada"/><rect x="1115" y="14" width="2" height="4" fill="#72a6da"/><rect x="1121" y="14" width="2" height="4" fill="#72dada"/><rect x="1127" y="14" width="1" height="4" fill="#7e8cda"/><rect x="1133" y="14" width="1" height="4" fill="#72dada"/><rect x="1139" y="14" width="1" height="4" fill="#72dada"/><rect x="1145" y="14" width="1" height="4" fill="#72dada"/><rect x="1151" y="14" width="1" height="4" fill="#7e8cda"/><rect x="1157" y="14" width="2" height="4" fill="#72dada"/><rect x="1163" y="14" width="1" height="4" fill="#72dada"/><rect x="1169" y="14" width="1" height="4" fill="#72a6da"/><rect x="1176" y="14" width="1" height="4" fill="#72dada"/><rect x="1182" y="14" width="2" height="4" fill="#7e8cda"/><rect x="1188" y="14" width="1" height="4" fill="#72dada"/><rect x="1194" y="14" width="1" height="4" fill="#72dada"/><rect x="1200" y="14" width="2" height="4" fill="#72a6da"/><rect x="1206" y="14" width="1" height="4" fill="#72dada"/><rect x="1212" y="14" width="1" height="4" fill="#72dada"/><rect x="1218" y="14" width="1" height="4" fill="#7e8cda"/><rect x="1224" y="14" width="1" height="4" fill="#72a6da"/><rect x="1230" y="14" width="1" height="4" fill="#72dada"/><rect x="1236" y="14" width="1" height="4" fill="#72a6da"/><rect x="1242" y="14" width="1" height="4" fill="#72dada"/><rect x="1248" y="14" width="1" height="4" fill="#72dada"/><rect x="1254" y="14" width="1" height="4" fill="#72dada"/><rect x="1260" y="14" width="1" height="4" fill="#72dada"/><rect x="1266" y="14" width="1" height="4" fill="#72dada"/><rect x="1272" y="14" width="1" height="4" fill="#72dada"/><rect x="1278" y="14" width="1" height="4" fill="#72dada"/><rect x="1284" y="14" width="1" height="4" fill="#72dada"/><rect x="1290" y="14" width="1" height="4" fill="#72a6da"/><rect x="1296" y="14" width="1" height="4" fill="#72a6da"/><rect x="1302" y="14" width="1" height="4" fill="#72a6da"/><rect x="1308" y="14" width="2" height="4" fill="#72a6da"/><rect x="1314" y="14" width="1" height="4" fill="#7e8cda"/><rect x="1320" y="14" width="2" height="4" fill="#72dada"/><rect x="1326" y="14" width="2" height="4" fill="#72dada"/><rect x="1332" y="14" width="1" height="4" fill="#72a6da"/><rect x="1338" y="14" width="1" height="4" fill="#72dada"/><rect x="1344" y="14" width="1" height="4" fill="#72dada"/><rect x="1350" y="14" width="1" height="4" fill="#72a6da"/><rect x="1356" y="14" width="1" height="4" fill="#72a6da"/><rect x="1362" y="14" width="1" height="4" fill="#72dada"/><rect x="1368" y="14" width="1" height="4" fill="#72dada"/><rect x="1374" y="14" width="2" height="4" fill="#72a6da"/><rect x="1380" y="14" width="1" height="4" fill="#7e8cda"/><rect x="1386" y="14" width="1" height="4" fill="#72dada"/><rect x="1392" y="14" width="1" height="4" fill="#72dada"/><rect x="1398" y="14" width="1" height="4" fill="#72dada"/><rect x="1404" y="14" width="1" height="4" fill="#72dada"/><rect x="1410" y="14" width="1" height="4" fill="#72dada"/><rect x="1416" y="14" width="1" height="4" fill="#72dada"/><rect x="1422" y="14" width="1" height="4" fill="#72dada"/><rect x="1428" y="14" width="2" height="4" fill="#72a6da"/><rect x="1434" y="14" width="1" height="4" fill="#7e8cda"/><rect x="1440" y="14" width="2" height="4" fill="#72dada"/><rect x="1446" y="14" width="1" height="4" fill="#72dada"/><rect x="1452" y="14" width="1" height="4" fill="#72dada"/><rect x="1458" y="14" width="1" height="4" fill="#72dada"/><rect x="1464" y="14" width="1" height="4" fill="#72dada"/><rect x="1470" y="14" width="2" height="4" fill="#72a6da"/><rect x="1477" y="14" width="1" height="4" fill="#72dada"/><rect x="1483" y="14" width="1" height="4" fill="#72a6da"/><rect x="1489" y="14" width="1" height="4" fill="#72dada"/><rect x="1495" y="14" width="1" height="4" fill="#72dada"/><rect x="1501" y="14" width="2" height="4" fill="#72a6da"/><rect x="1507" y="14" width="2" height="4" fill="#72a6da"/><rect x="1513" y="14" width="1" height="4" fill="#72a6da"/><rect x="1519" y="14" width="1" height="4" fill="#72dada"/><rect x="1525" y="14" width="2" height="4" fill="#7e8cda"/><rect x="601" y="14" width="3" height="4" fill="#c972da"/><rect x="1424" y="14" width="4" height="4" fill="#72daa6"/><rect x="0" y="18" width="1534" height="3" fill="#dcc864"/><rect x="523" y="21" width="2" height="3" fill="#e09a60"/><rect x="529" y="21" width="2" height="3" fill="#e09a60"/><rect x="535" y="21" width="2" height="3" fill="#e09a60"/><rect x="541" y="21" width="2" height="3" fill="#e09a60"/><rect x="547" y="21" width="2" height="3" fill="#e09a60"/><rect x="553" y="21" width="2" height="3" fill="#e09a60"/><rect x="559" y="21" width="2" height="3" fill="#e09a60"/><rect x="565" y="21" width="2" height="3" fill="#e09a60"/><rect x="571" y="21" width="2" height="3" fill="#e09a60"/><rect x="577" y="21" width="2" height="3" fill="#e09a60"/><rect x="583" y="21" width="2" height="3" fill="#e09a60"/><rect x="589" y="21" width="2" height="3" fill="#e09a60"/><rect x="595" y="21" width="2" height="3" fill="#e09a60"/><rect x="602" y="21" width="3" height="3" fill="#e09a60"/><rect x="607" y="21" width="3" height="3" fill="#e09a60"/><rect x="613" y="21" width="3" height="3" fill="#e09a60"/><rect x="619" y="21" width="3" height="3" fill="#e09a60"/><rect x="625" y="21" width="3" height="3" fill="#e09a60"/><rect x="704" y="21" width="2" height="3" fill="#e09a60"/><rect x="50" y="28" width="30" height="3" fill="#daa372"/><rect x="81" y="28" width="17" height="3" fill="#c0da72"/><rect x="98" y="28" width="22" height="3" fill="#d7da72"/><rect x="120" y="28" width="18" height="3" fill="#83da72"/><rect x="138" y="28" width="12" height="3" fill="#dad772"/><rect x="150" y="28" width="106" height="3" fill="#83da72"/><rect x="258" y="28" width="18" height="3" fill="#83da72"/><rect x="276" y="28" width="12" height="3" fill="#dad772"/><rect x="288" y="28" width="132" height="3" fill="#83da72"/><rect x="420" y="28" width="12" height="3" fill="#dad772"/><rect x="432" y="28" width="16" height="3" fill="#83da72"/><rect x="450" y="28" width="116" height="3" fill="#83da72"/><rect x="566" y="28" width="12" height="3" fill="#dad772"/><rect x="578" y="28" width="18" height="3" fill="#83da72"/><rect x="596" y="28" width="8" height="3" fill="#afda72"/><rect x="604" y="28" width="22" height="3" fill="#83da72"/><rect x="627" y="28" width="95" height="3" fill="#83da72"/><rect x="722" y="28" width="12" height="3" fill="#dad772"/><rect x="734" y="28" width="108" height="3" fill="#83da72"/><rect x="842" y="28" width="8" height="3" fill="#c9da72"/><rect x="850" y="28" width="20" height="3" fill="#83da72"/><rect x="871" y="28" width="17" height="3" fill="#83da72"/><rect x="890" y="28" width="168" height="3" fill="#83da72"/><rect x="1058" y="28" width="12" height="3" fill="#dad772"/><rect x="1070" y="28" width="52" height="3" fill="#83da72"/><rect x="1124" y="28" width="8" height="3" fill="#83da72"/><rect x="1132" y="28" width="10" height="3" fill="#c9da72"/><rect x="1142" y="28" width="43" height="3" fill="#83da72"/><rect x="1186" y="28" width="20" height="3" fill="#83da72"/><rect x="1208" y="28" width="24" height="3" fill="#83da72"/><rect x="1232" y="28" width="12" height="3" fill="#dad772"/><rect x="1244" y="28" width="106" height="3" fill="#83da72"/><rect x="1352" y="28" width="12" height="3" fill="#83da72"/><rect x="1364" y="28" width="11" height="3" fill="#dad772"/><rect x="1375" y="28" width="115" height="3" fill="#83da72"/><rect x="1490" y="28" width="24" height="3" fill="#d7da72"/><rect x="1514" y="28" width="12" height="3" fill="#83da72"/><rect x="1528" y="28" width="4" height="3" fill="#83da72"/><rect x="1" y="34" width="4" height="3" fill="#da72da"/><rect x="25" y="34" width="3" height="3" fill="#7272da"/><rect x="4" y="38" width="2" height="3" fill="#7283da"/><rect x="9" y="38" width="10" height="3" fill="#72dad2"/><rect x="19" y="38" width="8" height="3" fill="#72dada"/><rect x="27" y="38" width="4" height="3" fill="#8372da"/><rect x="31" y="38" width="4" height="3" fill="#b7da72"/><rect x="5" y="41" width="6" height="3" fill="#95da72"/><rect x="24" y="41" width="4" height="3" fill="#dac072"/><rect x="28" y="41" width="2" height="3" fill="#7295da"/><rect x="26" y="44" width="2" height="4" fill="#72dad2"/><rect x="2" y="48" width="2" height="3" fill="#da72da"/><rect x="4" y="48" width="5" height="3" fill="#72da72"/><rect x="9" y="48" width="2" height="3" fill="#c9da72"/><rect x="24" y="48" width="2" height="3" fill="#da9572"/><rect x="26" y="48" width="2" height="3" fill="#72dada"/><rect x="28" y="48" width="2" height="3" fill="#7272da"/><rect x="595" y="44" width="2" height="4" fill="#729dda"/><rect x="595" y="48" width="2" height="3" fill="#72d2da"/></svg>
<div style="left:0px;top:1px;width:19px;height:51px;background:rgba(0,0,0,0.38);"></div>
</div>
<div style="left:325px;top:1130px;width:1534px;height:24px;background:#d6d2d0;"></div>
<div style="left:325px;top:1129px;width:1534px;height:1px;background:#b0aca9;"></div>
<div style="left:326px;top:1129px;width:75px;height:24px;background:linear-gradient(#e4e1df,#dedad8);border:1px solid #a4a09e;border-top:none;border-radius:0 0 3px 3px;box-sizing:border-box;"></div>
<div style="left:401px;top:1130px;width:103px;height:21px;background:linear-gradient(#cbc7c5,#c6c2c0);border:1px solid #aaa6a4;border-top:none;border-radius:0 0 3px 3px;box-sizing:border-box;"></div>
<div style="left:504px;top:1130px;width:81px;height:21px;background:linear-gradient(#cbc7c5,#c6c2c0);border:1px solid #aaa6a4;border-top:none;border-radius:0 0 3px 3px;box-sizing:border-box;"></div>
<div class="t" style="left:337px;top:1125px;font-size:12.3px;color:#1a1a1a;letter-spacing:-0.2px;"><span class="bl"></span>Timeline</div>
<div class="t" style="left:412px;top:1124px;font-size:12.3px;color:#1a1a1a;"><span class="bl"></span>Flame Graph</div>
<div class="t" style="left:515px;top:1124px;font-size:12.3px;color:#1a1a1a;letter-spacing:0.15px;"><span class="bl"></span>Statistics</div>
<div style="left:71px;top:1154px;width:1788px;height:26px;background:#404244;"></div>
<div style="left:73px;top:1157px;width:24px;height:21px;background:#262728;"></div>
<svg style="left:79px;top:1162px;" width="11" height="11" viewBox="0 0 11 11"><rect x="0.5" y="0.5" width="10" height="10" fill="none" stroke="#d4d4d4" stroke-width="1"/><rect x="1" y="1" width="4" height="9" fill="#bcbcbe"/></svg>
<div style="left:103px;top:1157px;width:200px;height:21px;background:#fff;"></div>
<svg style="left:108px;top:1160px;" width="18" height="16" viewBox="0 0 18 16"><circle cx="8.6" cy="6" r="3.6" fill="none" stroke="#555" stroke-width="1.5"/><path d="M6 8.6 L1.8 13" stroke="#555" stroke-width="2" fill="none"/><path d="M11.5 11 L16 11 L13.75 13.6 Z" fill="#555"/></svg>
<div class="t" style="left:131px;top:1152px;font-size:12.3px;color:#8a8a8a;"><span class="bl"></span>Type to locate (Ctrl+K)</div>
<div style="left:306px;top:1157px;width:1px;height:21px;background:#6a6c6e;"></div>
<div class="t" style="left:315px;top:1152px;font-size:12.3px;color:#fff;"><span class="bl"></span>1</div>
<div class="t" style="left:330px;top:1152px;font-size:12.3px;color:#fff;letter-spacing:0.28px;"><span class="bl"></span>Issues</div>
<div class="t" style="left:386px;top:1152px;font-size:12.3px;color:#fff;"><span class="bl"></span>2</div>
<div class="t" style="left:401px;top:1152px;font-size:12.3px;color:#fff;letter-spacing:0.215px;"><span class="bl"></span>Search Results</div>
<div class="t" style="left:511px;top:1152px;font-size:12.3px;color:#fff;"><span class="bl"></span>3</div>
<div class="t" style="left:526px;top:1152px;font-size:12.3px;color:#fff;"><span class="bl"></span>Application Output</div>
<div class="t" style="left:658px;top:1152px;font-size:12.3px;color:#fff;"><span class="bl"></span>4</div>
<div class="t" style="left:673px;top:1152px;font-size:12.3px;color:#fff;letter-spacing:-0.19px;"><span class="bl"></span>Compile Output</div>
<div class="t" style="left:785px;top:1152px;font-size:12.3px;color:#fff;"><span class="bl"></span>5</div>
<div class="t" style="left:800px;top:1152px;font-size:12.3px;color:#fff;letter-spacing:0.15px;"><span class="bl"></span>Debugger Console</div>
<div class="t" style="left:932px;top:1152px;font-size:12.3px;color:#fff;"><span class="bl"></span>6</div>
<div class="t" style="left:947px;top:1152px;font-size:12.3px;color:#fff;letter-spacing:0.23px;"><span class="bl"></span>To-Do Entries</div>
<div class="t" style="left:1047px;top:1152px;font-size:12.3px;color:#fff;"><span class="bl"></span>7</div>
<div class="t" style="left:1062px;top:1152px;font-size:12.3px;color:#fff;letter-spacing:0.22px;"><span class="bl"></span>General Messages</div>
<div class="t" style="left:1194px;top:1152px;font-size:12.3px;color:#fff;"><span class="bl"></span>9</div>
<div class="t" style="left:1209px;top:1152px;font-size:12.3px;color:#fff;letter-spacing:0.43px;"><span class="bl"></span>Test Results</div>
<svg style="left:1304px;top:1161px;" width="8" height="14" viewBox="0 0 8 14"><path d="M0.4 5.6 L4 1 L7.6 5.6 Z M0.4 8.4 L4 13 L7.6 8.4 Z" fill="#c4c4c4"/></svg>
<div style="left:1816px;top:1157px;width:12px;height:21px;background:#262728;"></div>
<svg style="left:1818px;top:1163px;" width="8" height="6" viewBox="0 0 8 6"><path d="M0 5 L4 0.6 L8 5 Z" fill="#fff"/></svg>
<svg style="left:1841px;top:1161px;" width="12" height="13" viewBox="0 0 12 13"><rect x="0.5" y="0.5" width="10" height="11" fill="none" stroke="#6a6c6e" stroke-width="1"/><rect x="6" y="0" width="5" height="12" fill="#6a6c6e"/></svg>
</div></body></html>
